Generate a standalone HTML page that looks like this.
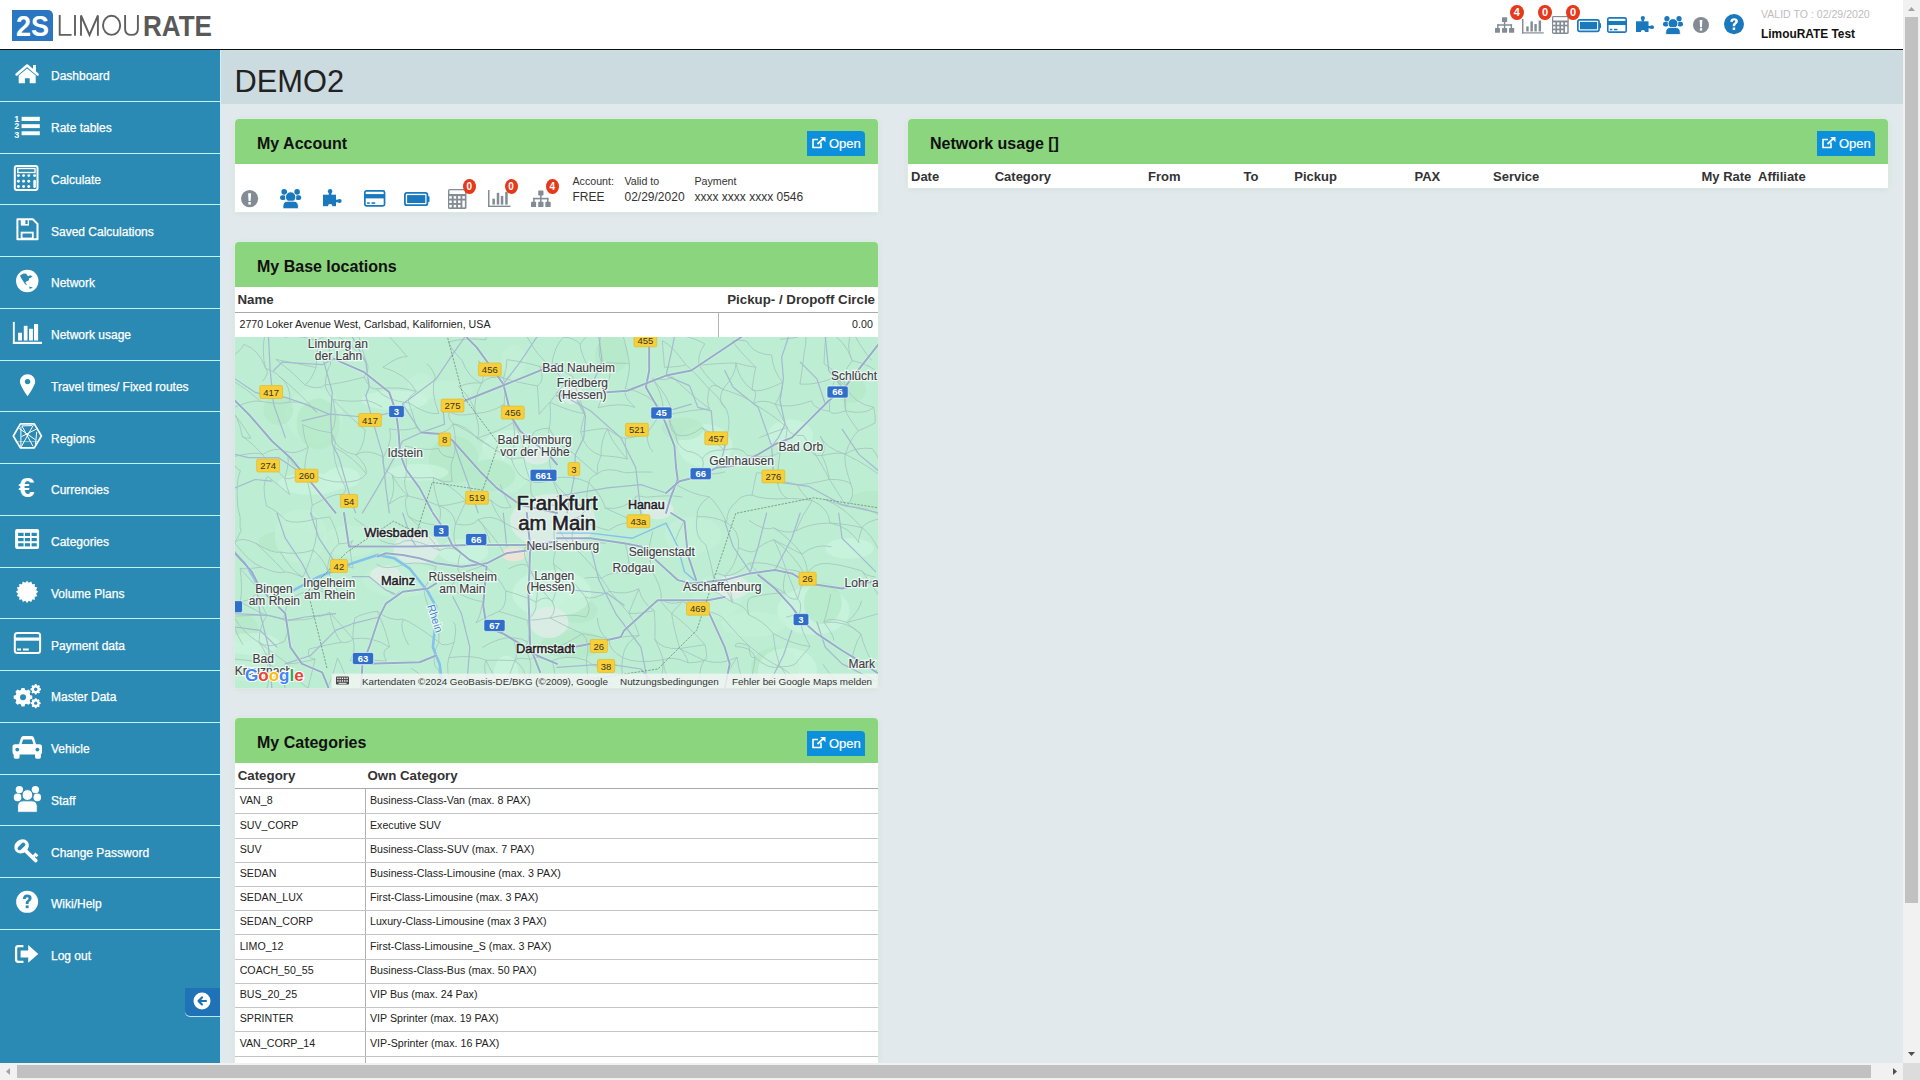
<!DOCTYPE html>
<html><head><meta charset="utf-8"><title>LimouRATE</title>
<style>
html,body{margin:0;padding:0;width:1920px;height:1080px;overflow:hidden;background:#e2e9ec;font-family:"Liberation Sans",sans-serif;position:relative;}
.a{position:absolute;}
.t{position:absolute;line-height:1;white-space:nowrap;}
.ic{position:absolute;overflow:visible;}
</style></head><body>
<div class="a" style="left:0px;top:0px;width:1903px;height:49px;background:#fff;"></div>
<div class="a" style="left:0px;top:49px;width:1903px;height:1px;background:#111;"></div>
<div class="a" style="left:12px;top:10px;width:41.3px;height:30.7px;background:#2a76c0;border-radius:0 5px 0 0;"></div>
<svg class="ic" style="left:0;top:0" width="220" height="49"><text x="16" y="35.5" font-family="Liberation Sans" font-weight="bold" font-size="29" fill="#fff" textLength="33" lengthAdjust="spacingAndGlyphs">2S</text><path d="M59.7 14.9 V34.9 H71.6" stroke="#5f5f5f" stroke-width="1.9" fill="none"/><path d="M75 14.9 V35.8" stroke="#5f5f5f" stroke-width="1.9" fill="none"/><path d="M81 35.8 V15.5 L89.5 35 L97.9 15.5 V35.8" stroke="#5f5f5f" stroke-width="1.9" fill="none" stroke-linejoin="miter"/><ellipse cx="111.6" cy="25.35" rx="8.6" ry="9.55" stroke="#5f5f5f" stroke-width="1.9" fill="none"/><path d="M125.1 14.9 V29 Q125.1 34.9 131.5 34.9 Q137.9 34.9 137.9 29 V14.9" stroke="#5f5f5f" stroke-width="1.9" fill="none"/><text x="143" y="35.5" font-family="Liberation Sans" font-weight="bold" font-size="29" fill="#595959" textLength="69" lengthAdjust="spacingAndGlyphs">RATE</text></svg>
<div class="t" style="left:1761.00px;top:8.55px;font-size:10.57px;color:#bdbdbd;">VALID TO : 02/29/2020</div>
<div class="t" style="left:1761.00px;top:28.53px;font-size:11.9px;color:#111;font-weight:bold;">LimouRATE Test</div>
<svg class="ic" style="left:1495.4px;top:17px" width="19.2" height="16" viewBox="0 0 19.7 17.2" preserveAspectRatio="none"><rect x="7.2" y="0.4" width="5.3" height="5" rx="0.6" fill="#838c95"/><rect x="9.1" y="5" width="1.5" height="3" fill="#838c95"/><rect x="2.2" y="7.8" width="15.3" height="1.6" fill="#838c95"/><rect x="2.2" y="7.8" width="1.5" height="4.5" fill="#838c95"/><rect x="9.1" y="7.8" width="1.5" height="4.5" fill="#838c95"/><rect x="16" y="7.8" width="1.5" height="4.5" fill="#838c95"/><rect x="0" y="11.8" width="5.1" height="5.2" rx="0.6" fill="#838c95"/><rect x="7.2" y="11.8" width="5.3" height="5.2" rx="0.6" fill="#838c95"/><rect x="14.4" y="11.8" width="5.3" height="5.2" rx="0.6" fill="#838c95"/></svg>
<svg class="ic" style="left:1522px;top:18.5px" width="21.75" height="14.5" viewBox="0 0 22.5 17" preserveAspectRatio="none"><rect x="0" y="0" width="1.5" height="17" fill="#838c95"/><rect x="0" y="15.6" width="22.5" height="1.4" fill="#838c95"/><rect x="4.4" y="8.7" width="2.5" height="5.9" fill="#838c95"/><rect x="8.75" y="2.8" width="2.5" height="11.8" fill="#838c95"/><rect x="12.8" y="5.9" width="2.5" height="8.7" fill="#838c95"/><rect x="17.2" y="1.8" width="2.5" height="12.8" fill="#838c95"/></svg>
<svg class="ic" style="left:1552px;top:16px" width="16.75" height="18" viewBox="0 0 18.5 20" preserveAspectRatio="none"><rect x="0" y="0" width="18.5" height="20" rx="1.6" fill="#838c95"/><rect x="1.4" y="1.3" width="15.7" height="3.7" fill="#fff"/><rect x="1.25" y="7.15" width="2.5" height="2.5" fill="#fff"/><rect x="1.25" y="11.5" width="2.5" height="2.5" fill="#fff"/><rect x="1.25" y="15.850000000000001" width="2.5" height="2.5" fill="#fff"/><rect x="5.65" y="7.15" width="2.5" height="2.5" fill="#fff"/><rect x="5.65" y="11.5" width="2.5" height="2.5" fill="#fff"/><rect x="5.65" y="15.850000000000001" width="2.5" height="2.5" fill="#fff"/><rect x="10.0" y="7.15" width="2.5" height="2.5" fill="#fff"/><rect x="10.0" y="11.5" width="2.5" height="2.5" fill="#fff"/><rect x="10.0" y="15.850000000000001" width="2.5" height="2.5" fill="#fff"/><rect x="14.35" y="7.15" width="2.5" height="2.5" fill="#fff"/><rect x="14.35" y="11.5" width="2.5" height="6.85" fill="#fff"/></svg>
<svg class="ic" style="left:1577px;top:18.5px" width="24" height="13.2" viewBox="0 0 25.5 14.1" preserveAspectRatio="none"><rect x="0.9" y="0.9" width="22.5" height="12.3" rx="2" fill="none" stroke="#1a78bd" stroke-width="1.8"/><rect x="3.1" y="3.1" width="18.2" height="7.9" fill="#1a78bd"/><rect x="23.4" y="4.2" width="2.1" height="5.7" rx="0.5" fill="#1a78bd"/></svg>
<svg class="ic" style="left:1607px;top:17px" width="20" height="16" viewBox="0 0 21.4 16.7" preserveAspectRatio="none"><rect x="0.85" y="0.85" width="19.7" height="15.0" rx="1.6" fill="none" stroke="#1a78bd" stroke-width="1.7"/><rect x="0.5" y="4.1" width="20.4" height="4.3" fill="#1a78bd"/><rect x="3.1" y="12.3" width="2.6" height="1.6" fill="#1a78bd"/><rect x="7.5" y="12.3" width="3.7" height="1.6" fill="#1a78bd"/></svg>
<svg class="ic" style="left:1636px;top:16px" width="18" height="16" viewBox="0 0 18.7 17.2" preserveAspectRatio="none"><circle cx="7.1" cy="2.2" r="2.2" fill="#1a78bd"/><rect x="5.8" y="3" width="2.6" height="3" fill="#1a78bd"/><rect x="0" y="5.7" width="13" height="11.5" fill="#1a78bd"/><circle cx="16.6" cy="12" r="2.1" fill="#1a78bd"/><rect x="12.5" y="10.7" width="3" height="2.6" fill="#1a78bd"/><circle cx="7.2" cy="17.4" r="2.3" fill="#fff"/></svg>
<svg class="ic" style="left:1663px;top:16px" width="20" height="18.6" viewBox="0 0 21.3 19.8" preserveAspectRatio="none"><circle cx="4.2" cy="2.9" r="2.8" fill="#1a78bd"/><circle cx="17.1" cy="2.9" r="2.8" fill="#1a78bd"/><rect x="0" y="6.2" width="5.9" height="4.9" rx="2.4" fill="#1a78bd"/><rect x="15.4" y="6.2" width="5.9" height="4.9" rx="2.4" fill="#1a78bd"/><circle cx="10.65" cy="8" r="5.2" fill="#1a78bd" stroke="#fff" stroke-width="0.9"/><path d="M2.9 19.8 V17.2 Q2.9 12.2 7.9 12.2 H13.4 Q18.4 12.2 18.4 17.2 V19.8 Z" fill="#1a78bd" stroke="#fff" stroke-width="0.9"/></svg>
<svg class="ic" style="left:1693px;top:17px" width="16" height="16" viewBox="0 0 17.2 17.2" preserveAspectRatio="none"><circle cx="8.6" cy="8.6" r="8.6" fill="#838c95"/><path d="M7.1 3.2 H10.1 L9.6 11 H7.6 Z" fill="#fff"/><rect x="7.35" y="12" width="2.5" height="2.6" fill="#fff"/></svg>
<svg class="ic" style="left:1724px;top:14.3px" width="20" height="20.2" viewBox="0 0 20 20" preserveAspectRatio="none"><circle cx="10" cy="10" r="10" fill="#1a78bd"/><path d="M6.3 7.6 Q6.5 4.2 10.2 4.2 Q13.9 4.2 13.9 7.2 Q13.9 9 12 10.1 Q11.2 10.6 11.2 11.6 V12.2 H8.7 V11.2 Q8.7 9.5 10.3 8.6 Q11.3 8 11.3 7.3 Q11.3 6.3 10.1 6.3 Q8.9 6.3 8.7 7.9 Z" fill="#fff"/><rect x="8.7" y="13.4" width="2.5" height="2.4" fill="#fff"/></svg>
<div class="a" style="left:1510.05px;top:5.00px;width:13.7px;height:15.4px;border-radius:50%;background:#e6391c;"></div>
<div class="t" style="left:1510.05px;width:13.7px;text-align:center;top:7.35px;font-size:11px;font-weight:bold;color:#fff;">4</div>
<div class="a" style="left:1538.25px;top:5.00px;width:13.5px;height:15.4px;border-radius:50%;background:#e6391c;"></div>
<div class="t" style="left:1538.25px;width:13.5px;text-align:center;top:7.35px;font-size:11px;font-weight:bold;color:#fff;">0</div>
<div class="a" style="left:1566.25px;top:5.00px;width:13.5px;height:15.4px;border-radius:50%;background:#e6391c;"></div>
<div class="t" style="left:1566.25px;width:13.5px;text-align:center;top:7.35px;font-size:11px;font-weight:bold;color:#fff;">0</div>
<div class="a" style="left:0px;top:50px;width:220px;height:1013px;background:#2b8ab4;"></div>
<div class="a" style="left:220px;top:50px;width:1px;height:1013px;background:#d3eff8;"></div>
<div class="a" style="left:0;top:100.76px;width:220px;height:1px;background:#bff6fc;"></div>
<div class="t" style="left:51.00px;top:70.29px;font-size:12px;color:#fff;-webkit-text-stroke:0.25px #fff;">Dashboard</div>
<div class="a" style="left:0;top:152.52px;width:220px;height:1px;background:#bff6fc;"></div>
<div class="t" style="left:51.00px;top:122.05px;font-size:12px;color:#fff;-webkit-text-stroke:0.25px #fff;">Rate tables</div>
<div class="a" style="left:0;top:204.28px;width:220px;height:1px;background:#bff6fc;"></div>
<div class="t" style="left:51.00px;top:173.81px;font-size:12px;color:#fff;-webkit-text-stroke:0.25px #fff;">Calculate</div>
<div class="a" style="left:0;top:256.04px;width:220px;height:1px;background:#bff6fc;"></div>
<div class="t" style="left:51.00px;top:225.57px;font-size:12px;color:#fff;-webkit-text-stroke:0.25px #fff;">Saved Calculations</div>
<div class="a" style="left:0;top:307.80px;width:220px;height:1px;background:#bff6fc;"></div>
<div class="t" style="left:51.00px;top:277.33px;font-size:12px;color:#fff;-webkit-text-stroke:0.25px #fff;">Network</div>
<div class="a" style="left:0;top:359.56px;width:220px;height:1px;background:#bff6fc;"></div>
<div class="t" style="left:51.00px;top:329.09px;font-size:12px;color:#fff;-webkit-text-stroke:0.25px #fff;">Network usage</div>
<div class="a" style="left:0;top:411.32px;width:220px;height:1px;background:#bff6fc;"></div>
<div class="t" style="left:51.00px;top:380.85px;font-size:12px;color:#fff;-webkit-text-stroke:0.25px #fff;">Travel times/ Fixed routes</div>
<div class="a" style="left:0;top:463.08px;width:220px;height:1px;background:#bff6fc;"></div>
<div class="t" style="left:51.00px;top:432.61px;font-size:12px;color:#fff;-webkit-text-stroke:0.25px #fff;">Regions</div>
<div class="a" style="left:0;top:514.84px;width:220px;height:1px;background:#bff6fc;"></div>
<div class="t" style="left:51.00px;top:484.37px;font-size:12px;color:#fff;-webkit-text-stroke:0.25px #fff;">Currencies</div>
<div class="a" style="left:0;top:566.60px;width:220px;height:1px;background:#bff6fc;"></div>
<div class="t" style="left:51.00px;top:536.13px;font-size:12px;color:#fff;-webkit-text-stroke:0.25px #fff;">Categories</div>
<div class="a" style="left:0;top:618.36px;width:220px;height:1px;background:#bff6fc;"></div>
<div class="t" style="left:51.00px;top:587.89px;font-size:12px;color:#fff;-webkit-text-stroke:0.25px #fff;">Volume Plans</div>
<div class="a" style="left:0;top:670.12px;width:220px;height:1px;background:#bff6fc;"></div>
<div class="t" style="left:51.00px;top:639.65px;font-size:12px;color:#fff;-webkit-text-stroke:0.25px #fff;">Payment data</div>
<div class="a" style="left:0;top:721.88px;width:220px;height:1px;background:#bff6fc;"></div>
<div class="t" style="left:51.00px;top:691.41px;font-size:12px;color:#fff;-webkit-text-stroke:0.25px #fff;">Master Data</div>
<div class="a" style="left:0;top:773.64px;width:220px;height:1px;background:#bff6fc;"></div>
<div class="t" style="left:51.00px;top:743.17px;font-size:12px;color:#fff;-webkit-text-stroke:0.25px #fff;">Vehicle</div>
<div class="a" style="left:0;top:825.40px;width:220px;height:1px;background:#bff6fc;"></div>
<div class="t" style="left:51.00px;top:794.93px;font-size:12px;color:#fff;-webkit-text-stroke:0.25px #fff;">Staff</div>
<div class="a" style="left:0;top:877.16px;width:220px;height:1px;background:#bff6fc;"></div>
<div class="t" style="left:51.00px;top:846.69px;font-size:12px;color:#fff;-webkit-text-stroke:0.25px #fff;">Change Password</div>
<div class="a" style="left:0;top:928.92px;width:220px;height:1px;background:#bff6fc;"></div>
<div class="t" style="left:51.00px;top:898.45px;font-size:12px;color:#fff;-webkit-text-stroke:0.25px #fff;">Wiki/Help</div>
<div class="t" style="left:51.00px;top:950.21px;font-size:12px;color:#fff;-webkit-text-stroke:0.25px #fff;">Log out</div>
<div class="a" style="left:185px;top:988px;width:35px;height:27.5px;background:#1f72b6;border-radius:0 0 0 5px;box-shadow:0 1px 0 #bfe6f5;"></div>
<svg class="ic" style="left:193px;top:992px" width="18" height="18" viewBox="0 0 18 18"><circle cx="9" cy="9" r="8.5" fill="#fff"/><path d="M13 9 H6 M9 5.5 L5.5 9 L9 12.5" stroke="#1f72b6" stroke-width="2.2" fill="none" stroke-linecap="round" stroke-linejoin="round"/></svg>
<svg class="ic" style="left:0;top:0" width="60" height="1063" viewBox="0 0 60 1063"><path d="M16.6 74.4 L27.1 65.6 L37.6 74.4" stroke="#fff" stroke-width="2.6" fill="none" stroke-linecap="round" stroke-linejoin="round"/><rect x="33" y="65" width="2.9" height="6.5" fill="#fff"/><path d="M18.7 75.4 L27.1 68.6 L35.7 75.4 V83.2 H29.7 V78.2 H24.9 V83.2 H18.7 Z" fill="#fff"/><text x="14.2" y="121.6" font-family="Liberation Sans" font-weight="bold" font-size="9" fill="#fff">1</text><text x="14.2" y="129.2" font-family="Liberation Sans" font-weight="bold" font-size="9" fill="#fff">2</text><text x="14.2" y="137.6" font-family="Liberation Sans" font-weight="bold" font-size="9" fill="#fff">3</text><rect x="21.6" y="116.8" width="18.2" height="4.2" fill="#fff"/><rect x="21.6" y="124.2" width="18.2" height="3.9" fill="#fff"/><rect x="21.6" y="131.3" width="18.2" height="3.9" fill="#fff"/><rect x="14.8" y="166" width="22.7" height="24" rx="2" stroke="#fff" stroke-width="2" fill="none"/><rect x="17.8" y="168.5" width="17.2" height="4" stroke="#fff" stroke-width="1.4" fill="none"/><circle cx="18.4" cy="175.6" r="1.45" fill="#fff"/><circle cx="18.4" cy="181.2" r="1.45" fill="#fff"/><circle cx="18.4" cy="186.5" r="1.45" fill="#fff"/><circle cx="23.6" cy="175.6" r="1.45" fill="#fff"/><circle cx="23.6" cy="181.2" r="1.45" fill="#fff"/><circle cx="23.6" cy="186.5" r="1.45" fill="#fff"/><circle cx="28.75" cy="175.6" r="1.45" fill="#fff"/><circle cx="28.75" cy="181.2" r="1.45" fill="#fff"/><circle cx="28.75" cy="186.5" r="1.45" fill="#fff"/><circle cx="34.6" cy="175.6" r="1.45" fill="#fff"/><rect x="33.3" y="179.8" width="2.6" height="8.2" rx="1.2" fill="#fff"/><path d="M17.4 219.2 H32.8 L37.5 223.9 V239.3 H17.4 Z" stroke="#fff" stroke-width="2" fill="none" stroke-linejoin="round"/><rect x="20.8" y="219" width="8.2" height="6.6" fill="#fff"/><rect x="25.4" y="220.2" width="2.3" height="3.8" fill="#2b8ab4"/><rect x="21.6" y="232.6" width="11.2" height="5.9" stroke="#fff" stroke-width="1.8" fill="none"/><circle cx="27.25" cy="281" r="11.2" fill="#fff"/><path d="M20.3 275.2 L23.7 273.5 L26.4 273.8 L27 275.2 L28.7 276.3 L29.8 275.2 L32.6 276.3 L30.9 277.7 L29.2 278.2 L28.7 280.4 L26.4 281.6 L25.3 282.7 L27.6 285.2 L25.1 284.3 L23.7 282.1 L21.7 279.1 L20.3 276.6 Z" fill="#2b8ab4"/><path d="M29.2 286.6 L32.8 287.4 L29.8 289.1 Z" fill="#2b8ab4"/><rect x="12.9" y="321.9" width="1.85" height="22.1" fill="#fff"/><rect x="12.9" y="341.8" width="29.1" height="2.2" fill="#fff"/><rect x="18.1" y="332.7" width="3.9" height="7.8" fill="#fff"/><rect x="23.8" y="325.8" width="3.7" height="14.7" fill="#fff"/><rect x="29" y="328.8" width="3.9" height="11.7" fill="#fff"/><rect x="34" y="324" width="4.1" height="16.5" fill="#fff"/><path d="M27.55 374.2 C31.8 374.2 35.2 377.5 35.2 381.7 C35.2 385.5 27.55 396.2 27.55 396.2 C27.55 396.2 19.9 385.5 19.9 381.7 C19.9 377.5 23.3 374.2 27.55 374.2 Z" fill="#fff"/><circle cx="27.55" cy="381.6" r="2.7" fill="#2b8ab4"/><polygon points="13.3,436 20.4,423.9 34.3,423.9 41.4,436 34.3,447.9 20.4,447.9" stroke="#fff" stroke-width="1.7" fill="none" stroke-linejoin="round"/><line x1="21.85" y1="425.9" x2="33.1" y2="446.4" stroke="#fff" stroke-width="1"/><line x1="33.4" y1="425" x2="21.26" y2="446.7" stroke="#fff" stroke-width="1"/><line x1="20.9" y1="426.8" x2="20.9" y2="446.7" stroke="#fff" stroke-width="1"/><line x1="36.7" y1="431.85" x2="35.5" y2="444.6" stroke="#fff" stroke-width="1"/><line x1="18.9" y1="428.3" x2="35.2" y2="439.6" stroke="#fff" stroke-width="1"/><line x1="21.5" y1="436.6" x2="36.5" y2="429" stroke="#fff" stroke-width="1"/><line x1="21.85" y1="425.9" x2="32" y2="425.6" stroke="#fff" stroke-width="1"/><line x1="15.5" y1="441.6" x2="38.6" y2="441.6" stroke="#fff" stroke-width="1" stroke-opacity="0.45"/><text x="18.6" y="496.6" font-family="Liberation Sans" font-weight="bold" font-size="27" fill="#fff" textLength="16" lengthAdjust="spacingAndGlyphs">€</text><rect x="15.1" y="528.9" width="24" height="20.1" rx="2" fill="#fff"/><rect x="18.1" y="532.8" width="5.50" height="3.20" fill="#2b8ab4"/><rect x="18.1" y="538" width="5.50" height="3.20" fill="#2b8ab4"/><rect x="18.1" y="543.2" width="5.50" height="3.20" fill="#2b8ab4"/><rect x="24.9" y="532.8" width="5.10" height="3.20" fill="#2b8ab4"/><rect x="24.9" y="538" width="5.10" height="3.20" fill="#2b8ab4"/><rect x="24.9" y="543.2" width="5.10" height="3.20" fill="#2b8ab4"/><rect x="31.6" y="532.8" width="5.20" height="3.20" fill="#2b8ab4"/><rect x="31.6" y="538" width="5.20" height="3.20" fill="#2b8ab4"/><rect x="31.6" y="543.2" width="5.20" height="3.20" fill="#2b8ab4"/><polygon points="27.05,580.75 28.84,582.83 31.30,581.59 32.16,584.20 34.90,584.00 34.70,586.74 37.31,587.60 36.07,590.06 38.15,591.85 36.07,593.64 37.31,596.10 34.70,596.96 34.90,599.70 32.16,599.50 31.30,602.11 28.84,600.87 27.05,602.95 25.26,600.87 22.80,602.11 21.94,599.50 19.20,599.70 19.40,596.96 16.79,596.10 18.03,593.64 15.95,591.85 18.03,590.06 16.79,587.60 19.40,586.74 19.20,584.00 21.94,584.20 22.80,581.59 25.26,582.83" fill="#fff"/><rect x="14.8" y="632.9" width="25.3" height="20.1" rx="2.5" stroke="#fff" stroke-width="2" fill="none"/><rect x="14.5" y="637.5" width="26" height="3.2" fill="#fff"/><rect x="17.1" y="648.5" width="3.9" height="2" fill="#fff"/><rect x="22.9" y="648.5" width="5.85" height="2" fill="#fff"/><polygon points="30.05,694.94 32.28,695.73 32.28,698.67 30.05,699.46 29.58,700.59 30.60,702.73 28.53,704.80 26.39,703.78 25.26,704.25 24.47,706.48 21.53,706.48 20.74,704.25 19.61,703.78 17.47,704.80 15.40,702.73 16.42,700.59 15.95,699.46 13.72,698.67 13.72,695.73 15.95,694.94 16.42,693.81 15.40,691.67 17.47,689.60 19.61,690.62 20.74,690.15 21.53,687.92 24.47,687.92 25.26,690.15 26.39,690.62 28.53,689.60 30.60,691.67 29.58,693.81" fill="#fff"/><circle cx="23.0" cy="697.2" r="7.25" fill="#fff"/><circle cx="23.0" cy="697.2" r="3.0" fill="#2b8ab4"/><polygon points="39.51,688.08 40.93,688.47 40.93,690.13 39.51,690.52 39.26,691.13 39.99,692.42 38.82,693.59 37.53,692.86 36.92,693.11 36.53,694.53 34.87,694.53 34.48,693.11 33.87,692.86 32.58,693.59 31.41,692.42 32.14,691.13 31.89,690.52 30.47,690.13 30.47,688.47 31.89,688.08 32.14,687.47 31.41,686.18 32.58,685.01 33.87,685.74 34.48,685.49 34.87,684.07 36.53,684.07 36.92,685.49 37.53,685.74 38.82,685.01 39.99,686.18 39.26,687.47" fill="#fff"/><circle cx="35.7" cy="689.3" r="3.92" fill="#fff"/><circle cx="35.7" cy="689.3" r="1.7" fill="#2b8ab4"/><polygon points="39.32,702.04 40.64,702.42 40.64,703.98 39.32,704.36 39.08,704.94 39.75,706.14 38.64,707.25 37.44,706.58 36.86,706.82 36.48,708.14 34.92,708.14 34.54,706.82 33.96,706.58 32.76,707.25 31.65,706.14 32.32,704.94 32.08,704.36 30.76,703.98 30.76,702.42 32.08,702.04 32.32,701.46 31.65,700.26 32.76,699.15 33.96,699.82 34.54,699.58 34.92,698.26 36.48,698.26 36.86,699.58 37.44,699.82 38.64,699.15 39.75,700.26 39.08,701.46" fill="#fff"/><circle cx="35.7" cy="703.2" r="3.72" fill="#fff"/><circle cx="35.7" cy="703.2" r="1.6" fill="#2b8ab4"/><path d="M18.6 745.5 L21 737.8 Q21.6 736.1 23.4 736.1 H31.6 Q33.4 736.1 34 737.8 L36.4 745.5 Z" fill="#fff"/><path d="M21.6 744.2 L23.1 739.6 H31.9 L33.4 744.2 Z" fill="#2b8ab4"/><rect x="12.5" y="744.2" width="29.5" height="10.4" rx="2.6" fill="#fff"/><rect x="13.7" y="752" width="5.9" height="6.7" rx="1.6" fill="#fff"/><rect x="35" y="752" width="5.9" height="6.7" rx="1.6" fill="#fff"/><circle cx="17.3" cy="749.6" r="1.9" fill="#2b8ab4"/><circle cx="37.4" cy="749.6" r="1.9" fill="#2b8ab4"/><circle cx="19.4" cy="789.6" r="3.7" fill="#fff"/><circle cx="35.4" cy="789.6" r="3.7" fill="#fff"/><rect x="13.8" y="793.6" width="7.6" height="7.6" rx="3.6" fill="#fff"/><rect x="33.5" y="793.6" width="7.6" height="7.6" rx="3.6" fill="#fff"/><circle cx="27.45" cy="795" r="5.4" fill="#fff" stroke="#2b8ab4" stroke-width="1"/><path d="M17.6 812.3 V806.4 Q17.6 800.8 23.2 800.8 H31.7 Q37.3 800.8 37.3 806.4 V812.3 Z" fill="#fff" stroke="#2b8ab4" stroke-width="1"/><ellipse cx="21.6" cy="846.4" rx="7.7" ry="6.6" transform="rotate(-40 21.6 846.4)" fill="#fff"/><path d="M19.5 848.3 L23.4 844.5" stroke="#2b8ab4" stroke-width="3.9" stroke-linecap="round"/><path d="M25.5 850.6 L35.8 860.6" stroke="#fff" stroke-width="3.6" stroke-linecap="round"/><path d="M31.6 856.6 L35.4 852.4 L38.4 855.2 L36.6 857.2 L35.4 856.2 L34.2 857.8 Z" fill="#fff"/><circle cx="27.15" cy="901.85" r="11" fill="#fff"/><path d="M22.9 898.9 Q23.1 894.6 27.3 894.6 Q31.6 894.6 31.6 898.2 Q31.6 900.3 29.5 901.5 Q28.6 902.1 28.6 903.2 V904 H25.7 V902.8 Q25.7 900.9 27.5 899.9 Q28.6 899.3 28.6 898.4 Q28.6 897.2 27.2 897.2 Q25.8 897.2 25.6 899.1 Z" fill="#2b8ab4"/><rect x="25.7" y="905.4" width="2.9" height="2.8" fill="#2b8ab4"/><path d="M23.4 946.2 H18.4 Q16.1 946.2 16.1 948.5 V959.6 Q16.1 961.9 18.4 961.9 H23.4" stroke="#fff" stroke-width="2.3" fill="none"/><path d="M20.6 950.6 H28.2 V945 L38.3 954 L28.2 962.8 V957.4 H20.6 Z" fill="#fff"/></svg>
<div class="a" style="left:221px;top:50px;width:1682px;height:53.5px;background:#cbdbe0;"></div>
<div class="t" style="left:234.50px;top:67.03px;font-size:30.8px;color:#222;">DEMO2</div>
<div class="a" style="left:235px;top:119px;width:643px;height:93px;background:#fff;border-radius:4px 4px 0 0;box-shadow:0 0 0 1px rgba(215,245,215,0.55),0 1px 6px rgba(0,0,0,0.06);"></div>
<div class="a" style="left:235px;top:119px;width:643px;height:45px;background:#8bd57e;border-radius:4px 4px 0 0;"></div>
<div class="t" style="left:257.00px;top:136.46px;font-size:16px;font-weight:bold;color:#111;">My Account</div>
<div class="a" style="left:807px;top:131px;width:58px;height:25px;background:#0d90db;border-radius:0 4px 0 0;"></div>
<svg class="ic" style="left:812px;top:137px" width="14" height="12" viewBox="0 0 14 12"><path d="M9 5.5 V10.5 H1 V2.5 H6" stroke="#fff" stroke-width="1.6" fill="none"/><path d="M5.5 7 L12 0.8" stroke="#fff" stroke-width="1.8"/><path d="M8.2 0 H13.5 V5.3 Z" fill="#fff"/></svg>
<div class="t" style="left:829.00px;top:137.00px;font-size:13px;color:#fff;-webkit-text-stroke:0.2px #fff;">Open</div>
<svg class="ic" style="left:240.6px;top:190.25px" width="17.2" height="17.15" viewBox="0 0 17.2 17.2" preserveAspectRatio="none"><circle cx="8.6" cy="8.6" r="8.6" fill="#838c95"/><path d="M7.1 3.2 H10.1 L9.6 11 H7.6 Z" fill="#fff"/><rect x="7.35" y="12" width="2.5" height="2.6" fill="#fff"/></svg>
<svg class="ic" style="left:280.2px;top:188.7px" width="21.3" height="19.8" viewBox="0 0 21.3 19.8" preserveAspectRatio="none"><circle cx="4.2" cy="2.9" r="2.8" fill="#1a78bd"/><circle cx="17.1" cy="2.9" r="2.8" fill="#1a78bd"/><rect x="0" y="6.2" width="5.9" height="4.9" rx="2.4" fill="#1a78bd"/><rect x="15.4" y="6.2" width="5.9" height="4.9" rx="2.4" fill="#1a78bd"/><circle cx="10.65" cy="8" r="5.2" fill="#1a78bd" stroke="#fff" stroke-width="0.9"/><path d="M2.9 19.8 V17.2 Q2.9 12.2 7.9 12.2 H13.4 Q18.4 12.2 18.4 17.2 V19.8 Z" fill="#1a78bd" stroke="#fff" stroke-width="0.9"/></svg>
<svg class="ic" style="left:322.9px;top:188.7px" width="18.7" height="17.2" viewBox="0 0 18.7 17.2" preserveAspectRatio="none"><circle cx="7.1" cy="2.2" r="2.2" fill="#1a78bd"/><rect x="5.8" y="3" width="2.6" height="3" fill="#1a78bd"/><rect x="0" y="5.7" width="13" height="11.5" fill="#1a78bd"/><circle cx="16.6" cy="12" r="2.1" fill="#1a78bd"/><rect x="12.5" y="10.7" width="3" height="2.6" fill="#1a78bd"/><circle cx="7.2" cy="17.4" r="2.3" fill="#fff"/></svg>
<svg class="ic" style="left:363.5px;top:190.25px" width="21.4" height="16.65" viewBox="0 0 21.4 16.7" preserveAspectRatio="none"><rect x="0.85" y="0.85" width="19.7" height="15.0" rx="1.6" fill="none" stroke="#1a78bd" stroke-width="1.7"/><rect x="0.5" y="4.1" width="20.4" height="4.3" fill="#1a78bd"/><rect x="3.1" y="12.3" width="2.6" height="1.6" fill="#1a78bd"/><rect x="7.5" y="12.3" width="3.7" height="1.6" fill="#1a78bd"/></svg>
<svg class="ic" style="left:403.6px;top:191.8px" width="25.5" height="14.1" viewBox="0 0 25.5 14.1" preserveAspectRatio="none"><rect x="0.9" y="0.9" width="22.5" height="12.3" rx="2" fill="none" stroke="#1a78bd" stroke-width="1.8"/><rect x="3.1" y="3.1" width="18.2" height="7.9" fill="#1a78bd"/><rect x="23.4" y="4.2" width="2.1" height="5.7" rx="0.5" fill="#1a78bd"/></svg>
<svg class="ic" style="left:447.5px;top:189px" width="18.5" height="20" viewBox="0 0 18.5 20" preserveAspectRatio="none"><rect x="0" y="0" width="18.5" height="20" rx="1.6" fill="#838c95"/><rect x="1.4" y="1.3" width="15.7" height="3.7" fill="#fff"/><rect x="1.25" y="7.15" width="2.5" height="2.5" fill="#fff"/><rect x="1.25" y="11.5" width="2.5" height="2.5" fill="#fff"/><rect x="1.25" y="15.850000000000001" width="2.5" height="2.5" fill="#fff"/><rect x="5.65" y="7.15" width="2.5" height="2.5" fill="#fff"/><rect x="5.65" y="11.5" width="2.5" height="2.5" fill="#fff"/><rect x="5.65" y="15.850000000000001" width="2.5" height="2.5" fill="#fff"/><rect x="10.0" y="7.15" width="2.5" height="2.5" fill="#fff"/><rect x="10.0" y="11.5" width="2.5" height="2.5" fill="#fff"/><rect x="10.0" y="15.850000000000001" width="2.5" height="2.5" fill="#fff"/><rect x="14.35" y="7.15" width="2.5" height="2.5" fill="#fff"/><rect x="14.35" y="11.5" width="2.5" height="6.85" fill="#fff"/></svg>
<svg class="ic" style="left:487.5px;top:190.2px" width="22.5" height="17.0" viewBox="0 0 22.5 17" preserveAspectRatio="none"><rect x="0" y="0" width="1.5" height="17" fill="#838c95"/><rect x="0" y="15.6" width="22.5" height="1.4" fill="#838c95"/><rect x="4.4" y="8.7" width="2.5" height="5.9" fill="#838c95"/><rect x="8.75" y="2.8" width="2.5" height="11.8" fill="#838c95"/><rect x="12.8" y="5.9" width="2.5" height="8.7" fill="#838c95"/><rect x="17.2" y="1.8" width="2.5" height="12.8" fill="#838c95"/></svg>
<svg class="ic" style="left:530.6px;top:190.2px" width="19.7" height="17.2" viewBox="0 0 19.7 17.2" preserveAspectRatio="none"><rect x="7.2" y="0.4" width="5.3" height="5" rx="0.6" fill="#838c95"/><rect x="9.1" y="5" width="1.5" height="3" fill="#838c95"/><rect x="2.2" y="7.8" width="15.3" height="1.6" fill="#838c95"/><rect x="2.2" y="7.8" width="1.5" height="4.5" fill="#838c95"/><rect x="9.1" y="7.8" width="1.5" height="4.5" fill="#838c95"/><rect x="16" y="7.8" width="1.5" height="4.5" fill="#838c95"/><rect x="0" y="11.8" width="5.1" height="5.2" rx="0.6" fill="#838c95"/><rect x="7.2" y="11.8" width="5.3" height="5.2" rx="0.6" fill="#838c95"/><rect x="14.4" y="11.8" width="5.3" height="5.2" rx="0.6" fill="#838c95"/></svg>
<div class="a" style="left:463.15px;top:179.30px;width:12.5px;height:15.2px;border-radius:50%;background:#e6391c;"></div>
<div class="t" style="left:463.15px;width:12.5px;text-align:center;top:182.03px;font-size:10px;font-weight:bold;color:#fff;">0</div>
<div class="a" style="left:504.50px;top:179.30px;width:13.2px;height:15.2px;border-radius:50%;background:#e6391c;"></div>
<div class="t" style="left:504.50px;width:13.2px;text-align:center;top:182.03px;font-size:10px;font-weight:bold;color:#fff;">0</div>
<div class="a" style="left:546.05px;top:179.30px;width:12.5px;height:15.2px;border-radius:50%;background:#e6391c;"></div>
<div class="t" style="left:546.05px;width:12.5px;text-align:center;top:182.03px;font-size:10px;font-weight:bold;color:#fff;">4</div>
<div class="t" style="left:572.50px;top:175.98px;font-size:10.65px;color:#333;">Account:</div>
<div class="t" style="left:572.50px;top:190.54px;font-size:12px;color:#333;">FREE</div>
<div class="t" style="left:624.50px;top:175.98px;font-size:10.65px;color:#333;">Valid to</div>
<div class="t" style="left:624.50px;top:190.54px;font-size:12px;color:#333;">02/29/2020</div>
<div class="t" style="left:694.50px;top:175.98px;font-size:10.65px;color:#333;">Payment</div>
<div class="t" style="left:694.50px;top:190.54px;font-size:12px;color:#333;">xxxx xxxx xxxx 0546</div>
<div class="a" style="left:235px;top:242px;width:643px;height:446px;background:#fff;border-radius:4px 4px 0 0;box-shadow:0 0 0 1px rgba(215,245,215,0.55),0 1px 6px rgba(0,0,0,0.06);"></div>
<div class="a" style="left:235px;top:242px;width:643px;height:45px;background:#8bd57e;border-radius:4px 4px 0 0;"></div>
<div class="t" style="left:257.00px;top:259.46px;font-size:16px;font-weight:bold;color:#111;">My Base locations</div>
<div class="t" style="left:237.50px;top:292.54px;font-size:13.3px;font-weight:bold;color:#333;">Name</div>
<div class="t" style="right:1045.00px;top:292.54px;font-size:13.3px;font-weight:bold;color:#333;">Pickup- / Dropoff Circle</div>
<div class="a" style="left:235px;top:312px;width:643px;height:1px;background:#a9a9a9;"></div>
<div class="a" style="left:718px;top:313px;width:1px;height:24px;background:#b5b5b5;"></div>
<div class="t" style="left:239.50px;top:318.98px;font-size:10.65px;color:#222;">2770 Loker Avenue West, Carlsbad, Kalifornien, USA</div>
<div class="t" style="right:1047.20px;top:318.98px;font-size:10.65px;color:#222;">0.00</div>
<svg class="ic" style="left:235px;top:337px" width="643" height="351" viewBox="235 337 643 351"><defs><clipPath id="mc"><rect x="235" y="337" width="643" height="351"/></clipPath></defs><g clip-path="url(#mc)"><rect x="235" y="337" width="643" height="351" fill="#bdeed4"/><ellipse cx="443.2" cy="389.9" rx="29.5" ry="9.4" fill="#c5f1d9" opacity="0.7"/><ellipse cx="295.5" cy="541.6" rx="37.3" ry="12.3" fill="#b3e8c8" opacity="0.7"/><ellipse cx="513.8" cy="361.5" rx="12.7" ry="16.5" fill="#c5f1d9" opacity="0.7"/><ellipse cx="314.6" cy="415.4" rx="28.8" ry="27.0" fill="#c5f1d9" opacity="0.7"/><ellipse cx="611.5" cy="354.4" rx="16.6" ry="19.1" fill="#b3e8c8" opacity="0.7"/><ellipse cx="421.2" cy="387.6" rx="13.5" ry="14.2" fill="#c5f1d9" opacity="0.7"/><ellipse cx="351.2" cy="541.1" rx="29.2" ry="15.4" fill="#c5f1d9" opacity="0.7"/><ellipse cx="692.9" cy="535.1" rx="28.6" ry="17.9" fill="#c5f1d9" opacity="0.7"/><ellipse cx="509.9" cy="447.3" rx="27.6" ry="17.1" fill="#ccf4de" opacity="0.7"/><ellipse cx="394.7" cy="400.1" rx="33.4" ry="9.6" fill="#ccf4de" opacity="0.7"/><ellipse cx="572.7" cy="644.2" rx="31.9" ry="13.8" fill="#b3e8c8" opacity="0.7"/><ellipse cx="310.9" cy="483.8" rx="32.7" ry="11.0" fill="#ccf4de" opacity="0.7"/><ellipse cx="506.2" cy="674.7" rx="12.3" ry="19.2" fill="#ccf4de" opacity="0.7"/><ellipse cx="453.7" cy="459.9" rx="24.9" ry="23.9" fill="#b3e8c8" opacity="0.7"/><ellipse cx="775.1" cy="668.6" rx="24.2" ry="21.3" fill="#b3e8c8" opacity="0.7"/><ellipse cx="705.1" cy="445.7" rx="27.3" ry="21.6" fill="#ccf4de" opacity="0.7"/><ellipse cx="418.0" cy="472.4" rx="30.1" ry="8.5" fill="#ccf4de" opacity="0.7"/><ellipse cx="463.6" cy="551.4" rx="24.8" ry="12.4" fill="#ccf4de" opacity="0.7"/><ellipse cx="318.2" cy="423.9" rx="21.7" ry="25.4" fill="#b3e8c8" opacity="0.7"/><ellipse cx="342.0" cy="478.0" rx="18.3" ry="10.7" fill="#ccf4de" opacity="0.7"/><ellipse cx="790.5" cy="434.7" rx="22.5" ry="15.2" fill="#ccf4de" opacity="0.7"/><ellipse cx="850.8" cy="390.0" rx="15.3" ry="12.6" fill="#b3e8c8" opacity="0.7"/><ellipse cx="242.8" cy="628.7" rx="15.5" ry="13.6" fill="#b3e8c8" opacity="0.7"/><ellipse cx="504.4" cy="466.6" rx="27.0" ry="27.1" fill="#c5f1d9" opacity="0.7"/><ellipse cx="787.5" cy="670.5" rx="29.6" ry="22.8" fill="#ccf4de" opacity="0.7"/><ellipse cx="813.4" cy="610.8" rx="36.2" ry="24.0" fill="#ccf4de" opacity="0.7"/><ellipse cx="491.0" cy="475.3" rx="24.4" ry="16.0" fill="#b3e8c8" opacity="0.7"/><ellipse cx="278.3" cy="410.3" rx="14.9" ry="14.8" fill="#b3e8c8" opacity="0.7"/><ellipse cx="300.8" cy="535.9" rx="26.1" ry="27.0" fill="#c5f1d9" opacity="0.7"/><ellipse cx="251.4" cy="643.9" rx="28.4" ry="11.0" fill="#ccf4de" opacity="0.7"/><ellipse cx="849.4" cy="548.4" rx="24.2" ry="10.3" fill="#ccf4de" opacity="0.7"/><ellipse cx="873.6" cy="500.6" rx="24.5" ry="9.7" fill="#b3e8c8" opacity="0.7"/><ellipse cx="717.0" cy="596.9" rx="24.4" ry="21.8" fill="#c5f1d9" opacity="0.7"/><ellipse cx="249.9" cy="670.8" rx="25.8" ry="10.9" fill="#c5f1d9" opacity="0.7"/><ellipse cx="822.8" cy="603.1" rx="18.9" ry="20.9" fill="#b3e8c8" opacity="0.7"/><ellipse cx="682.7" cy="428.7" rx="21.0" ry="11.3" fill="#b3e8c8" opacity="0.7"/><ellipse cx="577.5" cy="610.4" rx="19.9" ry="12.5" fill="#b3e8c8" opacity="0.7"/><ellipse cx="753.3" cy="624.2" rx="32.2" ry="12.5" fill="#c5f1d9" opacity="0.7"/><ellipse cx="551.9" cy="593.6" rx="39.7" ry="23.8" fill="#ccf4de" opacity="0.7"/><ellipse cx="401.6" cy="580.1" rx="38.7" ry="16.9" fill="#c5f1d9" opacity="0.7"/><ellipse cx="552.9" cy="521.2" rx="42.8" ry="27.2" fill="#dfece6" opacity="0.85"/><ellipse cx="416.7" cy="548.4" rx="23.3" ry="15.6" fill="#dfece6" opacity="0.85"/><ellipse cx="385.6" cy="575.6" rx="15.6" ry="9.7" fill="#dfece6" opacity="0.85"/><ellipse cx="549.0" cy="622.3" rx="19.4" ry="15.6" fill="#dfece6" opacity="0.85"/><ellipse cx="657.9" cy="509.5" rx="15.6" ry="9.7" fill="#dfece6" opacity="0.85"/><ellipse cx="731.8" cy="587.3" rx="17.5" ry="11.7" fill="#dfece6" opacity="0.85"/><ellipse cx="537.3" cy="455.0" rx="13.6" ry="9.7" fill="#dfece6" opacity="0.85"/><ellipse cx="572.3" cy="392.8" rx="9.7" ry="11.7" fill="#dfece6" opacity="0.85"/><ellipse cx="514.0" cy="554.2" rx="12" ry="7" fill="#ece3d6"/><path d="M243.8 344.3 Q242.4 349.2 232.6 355.9 M243.8 344.3 Q258.6 349.0 265.6 368.1 M232.6 355.9 Q233.6 375.2 230.1 378.9 M230.1 378.9 Q221.9 386.6 229.7 409.2 M230.1 378.9 Q247.2 389.0 260.6 401.3 M229.7 409.2 Q251.5 399.4 260.6 401.3 M229.7 409.2 Q238.4 415.0 242.2 436.0 M229.7 409.2 Q238.0 417.4 251.0 438.1 M242.2 436.0 Q242.2 438.4 251.0 438.1 M242.2 436.0 Q254.3 444.8 262.4 454.4 M234.6 456.4 Q255.5 451.3 262.4 454.4 M234.6 456.4 Q231.0 465.8 240.4 470.8 M240.4 470.8 Q235.4 481.2 237.9 507.4 M237.9 507.4 Q241.3 516.9 240.1 528.2 M240.1 528.2 Q243.8 528.0 234.6 542.5 M234.6 542.5 Q241.1 535.9 256.0 543.4 M234.6 542.5 Q248.8 561.9 261.3 567.1 M240.2 568.3 Q245.9 569.5 261.3 567.1 M240.2 568.3 Q242.6 590.1 240.4 601.9 M240.2 568.3 Q246.2 575.2 258.3 588.5 M240.4 601.9 Q255.6 599.7 258.3 588.5 M240.4 601.9 Q259.3 612.6 267.1 615.5 M233.1 616.2 Q254.0 615.1 267.1 615.5 M233.1 616.2 Q231.8 626.2 243.0 644.8 M233.1 616.2 Q243.4 633.4 259.0 642.5 M229.1 658.6 Q248.9 660.0 267.0 663.3 M228.7 694.5 Q250.3 698.7 267.2 688.0 M265.2 331.3 Q281.2 326.6 285.0 337.4 M265.2 331.3 Q261.2 353.6 265.6 368.1 M265.6 368.1 Q270.2 372.0 262.6 381.4 M265.6 368.1 Q278.7 374.1 278.8 375.9 M260.6 401.3 Q280.7 404.8 289.8 402.0 M262.4 454.4 Q275.9 446.1 285.5 451.2 M262.4 454.4 Q266.0 460.1 284.8 478.3 M267.5 476.3 Q261.2 483.6 266.4 506.0 M267.5 476.3 Q281.6 487.6 289.6 494.5 M266.4 506.0 Q277.4 510.9 285.5 520.2 M256.0 543.4 Q274.1 554.3 280.4 552.0 M256.0 543.4 Q265.6 551.5 284.6 572.0 M261.3 567.1 Q278.5 574.6 284.6 572.0 M258.3 588.5 Q256.3 595.5 267.1 615.5 M267.1 615.5 Q272.4 616.3 283.4 619.6 M267.1 615.5 Q259.2 625.5 259.0 642.5 M259.0 642.5 Q268.9 649.4 284.6 641.4 M259.0 642.5 Q268.6 654.8 267.0 663.3 M259.0 642.5 Q272.1 652.2 287.9 663.8 M267.0 663.3 Q270.4 676.3 267.2 688.0 M267.0 663.3 Q281.8 668.9 285.1 687.6 M285.0 337.4 Q293.1 334.0 317.1 340.2 M275.8 359.4 Q295.7 363.3 316.0 367.5 M275.8 359.4 Q290.2 369.7 304.9 384.8 M278.8 375.9 Q291.4 385.4 289.8 402.0 M278.8 375.9 Q301.2 394.2 317.2 412.6 M289.8 402.0 Q305.7 400.6 317.2 412.6 M285.5 451.2 Q295.1 455.4 308.2 447.2 M285.5 451.2 Q291.4 457.2 284.8 478.3 M285.5 451.2 Q291.2 467.3 304.5 470.6 M284.8 478.3 Q292.7 480.6 304.5 470.6 M284.8 478.3 Q286.6 486.9 289.6 494.5 M285.5 520.2 Q295.4 524.9 316.3 518.7 M280.4 552.0 Q295.8 555.4 313.1 550.2 M280.4 552.0 Q291.0 570.7 302.8 577.1 M284.6 572.0 Q288.7 571.4 302.8 577.1 M289.1 601.0 Q297.9 591.4 317.6 589.9 M289.1 601.0 Q286.6 604.9 283.4 619.6 M283.4 619.6 Q308.0 621.5 317.3 616.2 M283.4 619.6 Q291.4 624.1 284.6 641.4 M287.9 663.8 Q296.7 663.7 315.2 659.2 M287.9 663.8 Q281.8 674.0 285.1 687.6 M287.9 663.8 Q296.3 680.7 308.0 688.2 M317.1 340.2 Q326.2 335.6 331.0 332.1 M317.1 340.2 Q318.2 352.3 316.0 367.5 M316.0 367.5 Q311.6 380.1 304.9 384.8 M304.9 384.8 Q318.6 390.8 325.3 384.7 M302.7 424.5 Q313.8 430.6 330.9 432.6 M302.7 424.5 Q304.1 440.4 308.2 447.2 M308.2 447.2 Q305.1 458.1 304.5 470.6 M304.5 470.6 Q326.4 483.2 342.7 482.0 M304.5 470.6 Q310.9 492.4 312.2 505.3 M312.2 505.3 Q334.9 492.5 342.4 494.5 M312.2 505.3 Q308.9 516.5 316.3 518.7 M316.3 518.7 Q316.6 518.9 329.7 516.8 M316.3 518.7 Q318.2 534.6 313.1 550.2 M313.1 550.2 Q306.5 570.8 302.8 577.1 M313.1 550.2 Q323.1 558.2 327.3 569.8 M302.8 577.1 Q317.9 581.2 317.6 589.9 M302.8 577.1 Q318.4 586.7 341.3 599.5 M317.6 589.9 Q328.2 593.4 341.3 599.5 M317.3 616.2 Q319.0 618.0 329.6 612.2 M309.0 649.0 Q330.0 644.0 341.5 642.3 M309.0 649.0 Q306.1 658.5 315.2 659.2 M315.2 659.2 Q312.6 669.3 308.0 688.2 M308.0 688.2 Q319.2 694.7 326.0 691.0 M331.0 332.1 Q327.6 348.8 330.7 364.0 M331.0 332.1 Q354.1 345.0 366.5 362.6 M330.7 364.0 Q326.0 370.4 325.3 384.7 M325.3 384.7 Q336.7 384.5 364.1 377.1 M325.3 384.7 Q325.0 388.9 332.9 399.5 M332.9 399.5 Q351.2 402.4 365.1 400.3 M332.9 399.5 Q338.7 421.7 330.9 432.6 M332.9 399.5 Q354.3 421.2 365.2 429.9 M330.9 432.6 Q337.8 441.9 334.1 447.0 M330.9 432.6 Q335.5 450.9 355.8 454.8 M334.1 447.0 Q332.0 458.8 342.7 482.0 M334.1 447.0 Q354.7 457.9 366.3 473.7 M342.7 482.0 Q361.0 482.5 366.3 473.7 M342.7 482.0 Q348.8 490.0 342.4 494.5 M329.7 516.8 Q337.4 530.9 338.9 543.9 M338.9 543.9 Q351.9 543.0 352.6 540.4 M338.9 543.9 Q328.8 551.1 327.3 569.8 M327.3 569.8 Q339.7 563.2 353.3 568.0 M327.3 569.8 Q334.3 585.3 341.3 599.5 M341.3 599.5 Q353.7 598.5 355.1 598.6 M329.6 612.2 Q334.2 634.6 341.5 642.3 M329.6 612.2 Q343.4 627.6 352.9 638.8 M341.5 642.3 Q348.9 643.5 352.9 638.8 M337.5 658.0 Q331.5 680.9 326.0 691.0 M337.5 658.0 Q347.2 676.9 349.9 691.7 M326.0 691.0 Q343.7 689.2 349.9 691.7 M357.3 330.2 Q371.2 335.4 384.3 332.0 M357.3 330.2 Q360.9 345.1 366.5 362.6 M366.5 362.6 Q370.6 368.3 364.1 377.1 M364.1 377.1 Q370.3 390.6 376.3 388.9 M365.1 400.3 Q370.7 400.5 382.2 407.1 M365.2 429.9 Q364.0 448.5 355.8 454.8 M355.8 454.8 Q366.4 448.0 383.5 457.0 M355.8 454.8 Q367.8 466.0 366.3 473.7 M353.9 518.0 Q370.0 528.5 380.6 540.5 M352.6 540.4 Q347.8 546.8 353.3 568.0 M354.9 617.8 Q362.9 613.2 377.3 611.2 M354.9 617.8 Q352.8 630.5 352.9 638.8 M352.9 638.8 Q372.3 635.6 389.5 647.1 M352.9 638.8 Q356.4 650.9 350.0 660.6 M350.0 660.6 Q360.4 659.1 386.5 661.1 M384.3 332.0 Q394.4 325.4 407.4 331.5 M384.3 332.0 Q390.2 336.6 407.1 356.6 M382.9 367.4 Q398.0 355.9 407.1 356.6 M382.9 367.4 Q405.6 373.4 416.4 391.4 M376.3 388.9 Q399.9 386.0 416.4 391.4 M376.3 388.9 Q385.4 400.4 409.0 403.1 M389.4 428.9 Q405.0 431.6 416.5 427.6 M389.4 428.9 Q393.4 439.0 383.5 457.0 M383.5 457.0 Q380.0 468.4 392.1 474.9 M392.1 474.9 Q396.0 479.6 406.0 477.0 M392.1 474.9 Q396.5 489.3 389.4 504.1 M392.1 474.9 Q398.0 486.6 408.2 496.0 M389.4 504.1 Q401.6 494.4 408.2 496.0 M380.6 540.5 Q396.8 547.9 403.9 541.0 M376.7 564.1 Q384.5 571.5 406.3 563.7 M387.7 590.5 Q395.3 598.5 399.5 591.3 M377.3 611.2 Q389.2 621.4 403.3 619.2 M377.3 611.2 Q386.4 630.8 389.5 647.1 M389.5 647.1 Q380.0 650.3 386.5 661.1 M378.7 684.7 Q402.2 690.4 414.9 686.2 M416.4 391.4 Q406.1 398.1 409.0 403.1 M409.0 403.1 Q427.9 415.2 438.9 413.5 M409.0 403.1 Q414.4 418.2 416.5 427.6 M416.5 427.6 Q421.9 435.0 435.1 434.3 M405.5 446.0 Q426.9 451.5 438.5 448.2 M405.5 446.0 Q407.0 467.9 406.0 477.0 M406.0 477.0 Q419.3 478.7 433.3 477.5 M406.0 477.0 Q402.2 481.4 408.2 496.0 M408.2 496.0 Q424.6 499.3 438.9 505.7 M408.2 496.0 Q402.6 498.9 408.2 516.3 M408.2 516.3 Q417.2 523.0 438.7 525.5 M408.2 516.3 Q425.6 530.9 439.9 550.5 M403.9 541.0 Q414.2 538.3 439.9 550.5 M406.3 563.7 Q422.4 561.4 436.3 566.7 M403.3 619.2 Q398.6 627.4 408.6 645.2 M403.3 619.2 Q414.4 623.5 438.9 642.1 M411.0 668.1 Q425.1 676.3 436.1 687.8 M414.9 686.2 Q432.9 683.1 436.1 687.8 M426.5 364.0 Q430.2 364.8 435.4 376.5 M435.4 376.5 Q429.8 391.1 438.9 413.5 M435.1 434.3 Q448.7 432.4 453.1 423.8 M438.5 448.2 Q440.2 457.0 453.4 457.7 M433.3 477.5 Q444.2 483.5 452.3 481.2 M433.3 477.5 Q433.3 487.7 438.9 505.7 M433.3 477.5 Q449.4 483.8 466.1 500.7 M438.9 505.7 Q446.8 506.0 466.1 500.7 M438.9 505.7 Q442.3 510.7 438.7 525.5 M438.9 505.7 Q454.0 510.3 455.5 523.9 M439.9 550.5 Q449.6 544.8 460.9 551.9 M436.3 566.7 Q427.8 582.8 424.4 588.5 M424.4 588.5 Q422.9 592.9 430.3 611.5 M430.3 611.5 Q440.5 623.1 438.9 642.1 M438.9 642.1 Q442.8 647.6 454.1 642.3 M438.9 642.1 Q431.7 654.2 435.1 666.6 M435.1 666.6 Q443.3 670.1 436.1 687.8 M448.6 341.8 Q466.8 337.4 485.8 339.8 M448.6 341.8 Q450.6 348.9 462.0 360.4 M462.0 360.4 Q468.5 378.2 481.7 383.3 M458.2 386.3 Q473.6 381.5 481.7 383.3 M458.2 386.3 Q471.7 397.4 475.4 413.5 M449.8 411.0 Q454.6 417.6 475.4 413.5 M449.8 411.0 Q446.4 416.4 453.1 423.8 M453.1 423.8 Q466.1 425.2 476.9 438.3 M453.1 423.8 Q457.6 444.1 453.4 457.7 M453.1 423.8 Q464.9 428.4 490.2 446.3 M453.4 457.7 Q449.2 464.7 452.3 481.2 M466.1 500.7 Q471.5 504.1 490.7 500.0 M466.1 500.7 Q464.3 505.2 455.5 523.9 M455.5 523.9 Q472.3 527.5 478.1 519.6 M455.5 523.9 Q450.4 544.4 460.9 551.9 M460.9 551.9 Q455.3 567.9 459.7 573.3 M459.7 573.3 Q469.7 570.8 483.8 565.3 M459.7 573.3 Q455.1 580.2 450.0 588.8 M450.0 588.8 Q469.8 600.3 482.7 601.6 M453.1 621.7 Q457.6 625.0 454.1 642.3 M454.1 642.3 Q451.6 650.4 448.8 657.6 M448.8 657.6 Q474.9 654.5 486.0 660.3 M448.8 657.6 Q444.8 670.2 453.4 690.8 M453.4 690.8 Q465.0 692.4 489.5 687.8 M485.8 339.8 Q484.4 336.0 498.5 329.1 M478.5 360.7 Q486.0 375.4 481.7 383.3 M478.5 360.7 Q485.0 369.3 503.5 378.1 M481.7 383.3 Q489.0 374.6 503.5 378.1 M481.7 383.3 Q472.7 399.8 475.4 413.5 M475.4 413.5 Q491.0 412.8 504.2 404.3 M475.4 413.5 Q481.4 432.9 476.9 438.3 M476.9 438.3 Q500.5 430.8 513.2 422.6 M476.9 438.3 Q490.6 446.7 490.2 446.3 M490.2 446.3 Q498.2 451.8 511.6 459.4 M490.7 500.0 Q501.1 510.9 510.9 507.2 M490.7 500.0 Q495.7 513.2 503.3 522.2 M478.1 519.6 Q491.2 514.0 503.3 522.2 M478.1 519.6 Q484.3 523.6 490.3 543.0 M478.1 519.6 Q499.1 542.0 505.1 555.6 M483.8 565.3 Q497.0 574.3 505.7 590.8 M482.7 601.6 Q479.9 619.1 475.7 622.9 M475.7 622.9 Q487.6 616.1 498.9 611.4 M482.5 647.4 Q500.1 636.5 513.1 637.8 M486.0 660.3 Q496.7 659.9 514.9 660.6 M486.0 660.3 Q482.1 668.0 489.5 687.8 M486.0 660.3 Q491.1 672.7 502.8 688.2 M489.5 687.8 Q492.0 681.4 502.8 688.2 M498.5 329.1 Q517.8 333.8 526.2 335.0 M506.9 359.6 Q526.8 362.5 540.0 366.5 M506.9 359.6 Q507.0 368.3 503.5 378.1 M503.5 378.1 Q516.0 382.2 537.4 385.9 M503.5 378.1 Q505.2 383.3 504.2 404.3 M504.2 404.3 Q509.6 413.3 513.2 422.6 M513.2 422.6 Q516.7 435.6 511.6 459.4 M513.2 422.6 Q524.4 439.2 523.7 457.7 M511.6 459.4 Q515.8 457.6 523.7 457.7 M511.6 459.4 Q516.8 477.8 530.9 481.4 M500.2 484.2 Q502.9 493.4 510.9 507.2 M503.3 522.2 Q517.3 530.5 523.7 531.0 M508.6 568.8 Q524.7 560.3 529.0 567.8 M505.7 590.8 Q528.3 597.6 536.1 602.0 M505.7 590.8 Q506.9 607.1 498.9 611.4 M498.9 611.4 Q512.4 615.2 527.5 620.3 M513.1 637.8 Q521.5 638.1 528.2 642.1 M513.1 637.8 Q518.6 654.8 514.9 660.6 M514.9 660.6 Q517.3 656.8 529.9 659.3 M514.9 660.6 Q510.1 675.7 502.8 688.2 M514.9 660.6 Q527.0 669.1 525.7 683.3 M526.2 335.0 Q537.6 357.5 551.5 366.9 M540.0 366.5 Q538.5 367.8 551.5 366.9 M540.0 366.5 Q545.4 380.6 537.4 385.9 M537.4 385.9 Q538.6 403.0 539.2 414.3 M539.2 414.3 Q546.1 405.9 550.0 402.3 M532.7 434.1 Q534.5 429.1 549.1 428.1 M532.7 434.1 Q529.1 447.1 523.7 457.7 M523.7 457.7 Q526.3 471.6 530.9 481.4 M530.9 481.4 Q542.0 485.0 552.2 478.5 M530.9 481.4 Q529.7 497.1 534.4 497.4 M534.4 497.4 Q542.7 507.4 563.5 504.8 M525.1 547.2 Q537.6 546.6 556.9 545.6 M525.1 547.2 Q522.0 552.4 529.0 567.8 M529.0 567.8 Q540.4 587.1 536.1 602.0 M529.0 567.8 Q539.3 589.4 552.5 601.9 M536.1 602.0 Q547.3 594.0 552.5 601.9 M536.1 602.0 Q537.2 612.5 527.5 620.3 M527.5 620.3 Q538.6 619.9 549.8 617.9 M527.5 620.3 Q530.2 631.7 528.2 642.1 M528.2 642.1 Q523.0 645.2 529.9 659.3 M529.9 659.3 Q534.2 654.8 551.4 660.9 M529.9 659.3 Q532.9 673.1 525.7 683.3 M525.7 683.3 Q531.0 689.2 552.0 686.4 M563.8 337.0 Q575.5 338.3 580.3 344.3 M563.8 337.0 Q553.9 345.5 551.5 366.9 M551.5 366.9 Q557.6 373.1 565.4 383.0 M551.5 366.9 Q568.3 372.9 572.6 376.3 M565.4 383.0 Q559.6 388.6 550.0 402.3 M565.4 383.0 Q582.1 403.9 585.0 413.5 M550.0 402.3 Q573.9 413.0 585.0 413.5 M550.0 402.3 Q551.2 422.5 549.1 428.1 M549.1 428.1 Q547.4 442.4 549.1 449.8 M549.1 428.1 Q557.6 446.2 572.2 452.3 M549.1 449.8 Q565.4 446.9 572.2 452.3 M549.1 449.8 Q548.4 459.2 552.2 478.5 M552.2 478.5 Q571.5 474.4 588.9 482.6 M552.2 478.5 Q556.0 490.1 563.5 504.8 M552.2 478.5 Q563.9 498.6 587.6 508.4 M563.5 504.8 Q571.5 501.6 587.6 508.4 M563.5 504.8 Q555.0 506.4 554.9 522.8 M554.9 522.8 Q560.3 523.7 576.7 517.9 M554.9 522.8 Q552.2 539.6 556.9 545.6 M554.9 522.8 Q564.1 540.8 575.0 548.0 M556.9 545.6 Q552.9 558.4 553.6 564.0 M553.6 564.0 Q560.3 583.0 552.5 601.9 M553.6 564.0 Q568.6 574.5 585.2 596.8 M552.5 601.9 Q557.5 611.3 549.8 617.9 M549.8 617.9 Q569.6 612.9 586.0 617.1 M549.8 617.9 Q566.2 626.5 582.2 633.8 M558.8 647.0 Q574.8 638.6 582.2 633.8 M551.4 660.9 Q567.1 654.0 586.3 660.3 M551.4 660.9 Q557.3 670.8 552.0 686.4 M552.0 686.4 Q571.4 686.1 588.8 690.3 M580.3 344.3 Q588.1 330.7 602.4 331.0 M580.3 344.3 Q579.5 349.3 587.5 366.4 M587.5 366.4 Q593.0 371.0 601.5 362.6 M572.6 376.3 Q575.2 387.4 585.0 413.5 M585.0 413.5 Q581.5 425.3 580.7 432.0 M580.7 432.0 Q599.6 428.0 607.5 428.8 M580.7 432.0 Q584.7 450.4 601.0 455.6 M572.2 452.3 Q577.3 457.8 597.1 474.2 M588.9 482.6 Q589.9 476.5 597.1 474.2 M588.9 482.6 Q585.2 497.7 587.6 508.4 M588.9 482.6 Q602.5 496.5 605.3 508.1 M587.6 508.4 Q581.1 516.1 576.7 517.9 M576.7 517.9 Q598.0 528.6 608.6 530.3 M576.7 517.9 Q568.5 538.6 575.0 548.0 M575.0 548.0 Q586.2 539.4 605.5 543.4 M575.0 548.0 Q594.8 567.2 601.4 578.4 M584.5 578.1 Q596.1 576.5 601.4 578.4 M585.2 596.8 Q590.9 601.2 609.6 591.3 M585.2 596.8 Q592.5 610.0 586.0 617.1 M582.2 633.8 Q598.8 635.7 609.1 639.9 M582.2 633.8 Q591.1 641.1 586.3 660.3 M586.3 660.3 Q597.2 668.7 601.6 667.3 M586.3 660.3 Q588.3 682.8 588.8 690.3 M588.8 690.3 Q597.2 679.9 613.6 683.6 M602.4 331.0 Q611.0 328.0 622.3 334.4 M602.4 331.0 Q596.1 350.1 601.5 362.6 M601.5 362.6 Q611.2 363.2 629.3 363.3 M601.5 362.6 Q612.5 367.7 609.5 377.6 M609.5 377.6 Q604.9 389.9 598.2 407.6 M598.2 407.6 Q620.8 402.1 635.0 407.3 M607.5 428.8 Q620.7 438.8 625.4 438.1 M607.5 428.8 Q600.8 440.0 601.0 455.6 M607.5 428.8 Q610.3 440.5 627.3 459.1 M601.0 455.6 Q617.4 456.5 627.3 459.1 M601.0 455.6 Q596.3 464.4 597.1 474.2 M597.1 474.2 Q604.6 465.8 625.8 472.9 M605.3 508.1 Q623.8 510.5 635.4 497.5 M605.3 508.1 Q621.9 515.1 638.8 524.1 M608.6 530.3 Q624.4 519.4 638.8 524.1 M601.4 578.4 Q611.2 570.2 629.2 573.6 M601.4 578.4 Q609.9 590.3 609.6 591.3 M609.6 591.3 Q626.4 595.6 638.8 588.7 M609.6 591.3 Q623.8 607.5 628.8 613.2 M597.4 617.8 Q598.2 634.1 609.1 639.9 M609.1 639.9 Q625.0 635.6 639.2 635.5 M609.1 639.9 Q608.5 649.8 622.6 657.6 M622.3 334.4 Q625.8 343.4 629.3 363.3 M629.3 363.3 Q630.3 370.6 625.3 388.6 M625.3 388.6 Q622.8 396.9 635.0 407.3 M625.3 388.6 Q647.8 391.9 663.3 411.1 M625.4 438.1 Q632.7 438.3 647.0 433.2 M625.4 438.1 Q625.1 446.0 627.3 459.1 M625.8 472.9 Q635.9 471.6 652.4 472.1 M635.4 497.5 Q634.3 494.6 646.5 497.3 M635.4 497.5 Q644.6 517.4 638.8 524.1 M625.1 543.2 Q630.0 560.2 629.2 573.6 M638.8 588.7 Q631.3 607.1 628.8 613.2 M638.8 588.7 Q641.5 602.5 654.2 610.6 M628.8 613.2 Q634.9 614.5 654.2 610.6 M628.8 613.2 Q635.3 623.0 639.2 635.5 M639.2 635.5 Q624.8 641.4 622.6 657.6 M622.6 657.6 Q636.6 664.4 663.0 659.7 M622.6 657.6 Q619.2 676.5 628.8 694.4 M628.8 694.4 Q641.7 690.0 653.0 694.4 M662.3 340.7 Q663.6 355.4 664.4 367.3 M662.3 340.7 Q672.6 345.9 685.8 364.7 M664.4 367.3 Q680.9 366.8 685.8 364.7 M652.3 378.8 Q670.0 381.1 671.9 376.4 M652.3 378.8 Q663.1 393.2 663.3 411.1 M652.3 378.8 Q669.7 397.4 672.3 413.9 M663.3 411.1 Q659.6 415.1 647.0 433.2 M663.3 411.1 Q667.5 415.1 675.8 434.6 M647.0 433.2 Q646.9 445.9 653.2 452.0 M646.5 497.3 Q668.3 494.6 682.3 497.0 M652.7 531.5 Q648.7 547.1 648.6 555.0 M648.6 555.0 Q651.1 555.5 650.2 568.7 M650.2 568.7 Q662.5 586.9 661.2 599.6 M661.2 599.6 Q671.0 605.9 682.6 601.5 M661.2 599.6 Q658.7 600.3 671.6 613.5 M654.2 610.6 Q655.4 621.5 654.9 639.2 M654.9 639.2 Q661.6 649.8 679.7 648.5 M654.9 639.2 Q662.0 654.4 663.0 659.7 M663.0 659.7 Q673.1 655.7 688.3 662.8 M663.0 659.7 Q663.9 681.8 653.0 694.4 M663.0 659.7 Q664.2 678.4 675.7 686.9 M671.7 335.6 Q687.8 334.2 704.8 343.8 M685.8 364.7 Q694.7 372.3 709.2 389.0 M671.9 376.4 Q685.6 390.4 709.8 408.9 M672.3 413.9 Q692.3 409.6 709.8 408.9 M672.3 413.9 Q666.1 425.5 675.8 434.6 M675.8 434.6 Q688.1 438.9 701.8 427.7 M675.8 434.6 Q675.9 445.7 687.3 451.4 M687.3 451.4 Q694.9 451.2 702.4 458.5 M676.1 484.7 Q693.7 495.1 709.4 496.8 M684.1 521.3 Q676.6 535.2 676.1 539.7 M682.6 601.5 Q677.9 606.0 671.6 613.5 M682.6 601.5 Q687.4 603.6 697.4 611.3 M671.6 613.5 Q673.5 626.9 679.7 648.5 M671.6 613.5 Q685.8 623.2 704.9 644.6 M679.7 648.5 Q698.2 645.8 704.9 644.6 M679.7 648.5 Q685.1 652.5 688.3 662.8 M679.7 648.5 Q684.9 651.3 703.9 660.3 M688.3 662.8 Q699.8 662.4 703.9 660.3 M704.8 343.8 Q696.8 355.8 699.2 365.2 M699.2 365.2 Q721.9 363.0 735.9 363.0 M699.2 365.2 Q710.7 383.6 722.8 389.3 M709.2 389.0 Q712.1 381.5 722.8 389.3 M709.2 389.0 Q705.8 402.2 709.8 408.9 M709.2 389.0 Q715.9 393.8 725.9 408.3 M701.8 427.7 Q718.3 438.5 727.3 434.4 M701.8 427.7 Q717.9 444.8 724.2 450.0 M702.4 458.5 Q707.5 449.2 724.2 450.0 M702.4 458.5 Q705.9 467.8 697.3 472.6 M697.3 472.6 Q708.4 476.2 725.0 471.9 M709.4 496.8 Q696.2 505.4 697.0 516.7 M709.4 496.8 Q720.0 507.0 726.5 522.5 M697.0 516.7 Q713.3 515.8 726.5 522.5 M697.0 516.7 Q693.7 537.6 705.8 544.8 M705.8 544.8 Q711.5 564.6 713.5 577.1 M713.5 577.1 Q713.7 570.8 724.8 575.9 M713.5 577.1 Q728.0 588.5 732.4 602.3 M713.7 590.6 Q724.4 597.3 732.4 602.3 M697.4 611.3 Q713.8 610.5 722.5 617.4 M704.9 644.6 Q708.8 660.1 703.9 660.3 M703.9 660.3 Q720.9 665.9 737.1 657.2 M703.9 660.3 Q695.8 674.7 703.4 689.9 M732.7 341.0 Q748.6 338.4 748.8 344.6 M732.7 341.0 Q736.7 348.3 755.8 367.3 M735.9 363.0 Q745.9 366.0 755.8 367.3 M735.9 363.0 Q736.4 374.0 722.8 389.3 M735.9 363.0 Q738.8 380.1 752.0 389.7 M722.8 389.3 Q716.8 403.2 725.9 408.3 M722.8 389.3 Q745.8 396.3 753.4 403.4 M725.9 408.3 Q731.4 420.7 727.3 434.4 M727.3 434.4 Q729.5 435.2 724.2 450.0 M724.2 450.0 Q741.6 445.7 747.3 455.5 M736.5 502.1 Q740.3 494.8 752.0 495.1 M736.5 502.1 Q727.2 507.5 726.5 522.5 M726.5 522.5 Q740.4 530.6 738.5 547.7 M738.5 547.7 Q753.1 554.8 756.1 550.0 M738.5 547.7 Q735.7 567.0 724.8 575.9 M724.8 575.9 Q736.7 575.8 749.0 563.2 M724.8 575.9 Q731.5 590.7 732.4 602.3 M732.4 602.3 Q746.7 606.3 748.7 614.8 M722.5 617.4 Q741.6 639.6 749.0 645.9 M735.4 646.6 Q734.6 640.1 749.0 645.9 M735.4 646.6 Q751.9 646.5 755.2 657.6 M737.1 657.2 Q726.2 672.5 725.9 681.9 M737.1 657.2 Q739.6 678.5 747.2 686.3 M748.8 344.6 Q756.0 354.5 771.7 355.0 M755.8 367.3 Q754.0 374.2 752.0 389.7 M752.0 389.7 Q759.6 393.9 782.6 382.4 M752.0 389.7 Q758.8 390.4 753.4 403.4 M753.4 403.4 Q763.2 398.6 775.2 404.1 M753.4 403.4 Q774.1 415.5 787.2 427.6 M759.3 437.7 Q770.9 432.6 787.2 427.6 M747.3 455.5 Q771.2 459.8 780.3 451.7 M756.5 472.9 Q763.3 471.2 777.6 483.2 M756.5 472.9 Q754.4 482.5 752.0 495.1 M752.0 495.1 Q762.2 499.9 788.0 498.6 M749.0 520.3 Q764.4 531.8 773.6 527.8 M756.1 550.0 Q762.0 543.6 773.7 539.7 M749.0 563.2 Q766.2 560.8 786.3 569.8 M749.0 563.2 Q768.7 584.9 784.8 592.9 M751.2 597.3 Q769.8 593.1 784.8 592.9 M751.2 597.3 Q745.1 599.9 748.7 614.8 M748.7 614.8 Q763.9 621.3 773.0 633.4 M749.0 645.9 Q749.2 659.3 755.2 657.6 M749.0 645.9 Q768.4 662.0 780.0 666.9 M755.2 657.6 Q769.1 670.1 780.0 666.9 M755.2 657.6 Q753.3 675.9 747.2 686.3 M780.0 339.2 Q793.4 338.9 806.0 334.9 M771.7 355.0 Q772.7 370.5 782.6 382.4 M782.6 382.4 Q782.4 393.6 775.2 404.1 M775.2 404.1 Q787.6 409.4 811.5 400.9 M775.2 404.1 Q781.6 416.3 787.2 427.6 M787.2 427.6 Q790.2 436.7 803.6 435.5 M787.2 427.6 Q786.0 444.9 780.3 451.7 M780.3 451.7 Q777.0 472.8 777.6 483.2 M777.6 483.2 Q781.8 479.9 797.1 484.5 M777.6 483.2 Q780.5 495.8 788.0 498.6 M788.0 498.6 Q793.6 497.9 812.4 500.5 M773.6 527.8 Q784.4 534.2 795.8 531.0 M773.6 527.8 Q790.6 538.8 801.8 554.1 M773.7 539.7 Q783.6 544.8 801.8 554.1 M773.7 539.7 Q778.1 547.0 786.3 569.8 M773.7 539.7 Q791.0 550.9 806.0 576.2 M786.3 569.8 Q799.6 569.4 806.0 576.2 M786.3 569.8 Q781.4 586.7 784.8 592.9 M786.3 569.8 Q794.2 590.1 797.7 599.0 M784.8 592.9 Q790.0 600.6 797.7 599.0 M786.0 617.2 Q791.5 614.6 798.8 616.3 M773.0 633.4 Q793.9 644.9 810.0 646.5 M773.0 633.4 Q774.7 651.4 780.0 666.9 M780.0 666.9 Q796.6 666.9 798.1 660.1 M780.0 666.9 Q785.9 671.4 786.5 681.4 M780.0 666.9 Q795.1 675.6 802.0 688.3 M786.5 681.4 Q794.2 691.3 802.0 688.3 M806.0 334.9 Q806.4 344.2 803.9 354.7 M803.9 354.7 Q801.5 375.7 799.9 384.1 M799.9 384.1 Q818.0 385.5 835.7 376.5 M811.5 400.9 Q813.2 409.0 829.7 411.3 M803.6 435.5 Q803.5 435.6 812.2 449.2 M812.2 449.2 Q810.3 456.4 821.7 455.6 M812.2 449.2 Q823.7 467.7 829.4 479.4 M797.1 484.5 Q806.1 485.0 829.4 479.4 M797.1 484.5 Q806.1 500.5 812.4 500.5 M812.4 500.5 Q801.4 516.1 795.8 531.0 M812.4 500.5 Q829.0 508.2 830.0 523.0 M795.8 531.0 Q809.9 523.1 830.0 523.0 M801.8 554.1 Q815.3 543.2 831.4 546.7 M801.8 554.1 Q809.8 570.0 806.0 576.2 M806.0 576.2 Q811.9 562.6 827.4 563.4 M806.0 576.2 Q799.8 587.0 797.7 599.0 M797.7 599.0 Q803.1 602.8 798.8 616.3 M798.8 616.3 Q801.5 631.9 810.0 646.5 M810.0 646.5 Q800.4 658.0 798.1 660.1 M802.0 688.3 Q818.7 684.3 821.5 682.1 M826.4 331.0 Q824.2 349.7 824.0 364.0 M826.4 331.0 Q845.1 338.9 852.2 360.6 M824.0 364.0 Q836.6 371.2 835.7 376.5 M835.7 376.5 Q843.1 384.0 845.0 386.0 M835.7 376.5 Q828.1 399.3 829.7 411.3 M835.7 376.5 Q847.4 389.0 845.7 410.9 M829.7 411.3 Q831.2 415.7 845.7 410.9 M820.2 436.0 Q827.4 448.8 821.7 455.6 M820.2 436.0 Q825.6 448.2 845.2 454.1 M821.7 455.6 Q838.8 451.5 845.2 454.1 M821.7 455.6 Q826.9 464.6 829.4 479.4 M829.4 479.4 Q846.8 479.2 851.1 484.6 M829.4 479.4 Q842.9 500.7 846.7 506.5 M825.1 499.5 Q828.4 501.1 846.7 506.5 M825.1 499.5 Q844.4 507.2 862.2 527.9 M830.0 523.0 Q849.8 524.3 862.2 527.9 M830.0 523.0 Q849.7 526.8 858.9 542.7 M827.4 563.4 Q841.3 564.7 861.9 570.9 M830.7 594.2 Q827.0 613.9 823.8 622.0 M823.8 622.0 Q828.9 616.5 847.2 622.4 M823.8 622.0 Q835.0 636.8 833.6 640.5 M823.8 622.0 Q849.2 620.7 861.0 634.2 M822.8 664.2 Q832.3 678.5 847.1 694.3 M821.5 682.1 Q838.2 683.1 847.1 694.3 M852.0 330.5 Q845.2 346.5 852.2 360.6 M852.0 330.5 Q862.6 350.1 871.6 360.4 M852.2 360.6 Q841.2 373.5 845.0 386.0 M852.2 360.6 Q871.2 364.0 885.6 379.1 M845.0 386.0 Q843.4 401.1 845.7 410.9 M845.0 386.0 Q854.1 403.7 873.7 407.3 M845.7 410.9 Q865.2 415.1 873.7 407.3 M845.7 410.9 Q846.4 414.4 858.3 430.8 M858.3 430.8 Q866.4 427.6 874.7 423.2 M858.3 430.8 Q851.2 437.0 845.2 454.1 M845.2 454.1 Q856.6 446.5 872.3 448.6 M845.2 454.1 Q843.4 463.4 851.1 484.6 M845.2 454.1 Q871.5 467.2 885.9 480.3 M851.1 484.6 Q856.0 495.4 846.7 506.5 M846.7 506.5 Q868.9 506.7 883.1 518.0 M862.2 527.9 Q865.2 521.3 883.1 518.0 M862.2 527.9 Q857.2 541.6 858.9 542.7 M862.2 527.9 Q871.6 534.6 878.6 549.8 M861.9 570.9 Q864.6 575.5 875.5 577.0 M861.9 570.9 Q872.4 586.3 879.0 595.7 M861.5 601.1 Q859.3 611.1 847.2 622.4 M847.2 622.4 Q873.1 615.5 884.9 611.5 M847.2 622.4 Q847.5 624.2 861.0 634.2 M861.0 634.2 Q853.3 645.7 850.6 668.7 M861.0 634.2 Q864.1 649.1 876.1 669.4 M847.1 694.3 Q860.4 699.6 873.8 695.8 M873.7 407.3 Q876.2 420.8 874.7 423.2 M872.3 448.6 Q882.5 462.0 885.9 480.3 M885.9 480.3 Q892.9 490.7 885.1 495.5 M883.1 518.0 Q886.1 540.9 878.6 549.8 M876.1 669.4 Q880.1 687.2 873.8 695.8 " stroke="#a3c3bd" stroke-width="0.8" fill="none"/><path d="M273.6 370.5 L282.0 362.2 L322.2 364.7 L333.9 358.8" stroke="#a5b9d0" stroke-width="1.2" fill="none" stroke-linejoin="round" stroke-linecap="round" /><path d="M323.9 362.2 L332.3 392.3 L330.6 417.5 L332.3 444.3 L339.0 457.7 L352.4 504.7 L355.7 512.9" stroke="#a5b9d0" stroke-width="1.2" fill="none" stroke-linejoin="round" stroke-linecap="round" /><path d="M365.8 395.7 L377.5 437.6 L382.6 454.4 L385.9 487.9 L389.3 512.9" stroke="#a5b9d0" stroke-width="1.2" fill="none" stroke-linejoin="round" stroke-linecap="round" /><path d="M402.7 404.1 L421.1 432.6" stroke="#a5b9d0" stroke-width="1.2" fill="none" stroke-linejoin="round" stroke-linecap="round" /><path d="M442.9 409.1 L444.6 424.2 L421.1 432.6" stroke="#a5b9d0" stroke-width="1.2" fill="none" stroke-linejoin="round" stroke-linecap="round" /><path d="M235.0 454.4 L248.4 457.7 L278.6 457.7 L298.7 471.2" stroke="#a5b9d0" stroke-width="1.2" fill="none" stroke-linejoin="round" stroke-linecap="round" /><path d="M421.1 432.6 L402.7 441.0 L396.0 454.4 L377.5 487.9 L362.5 512.9" stroke="#a5b9d0" stroke-width="1.2" fill="none" stroke-linejoin="round" stroke-linecap="round" /><path d="M235.0 378.9 L255.1 392.3 L268.5 395.7 L285.3 397.4 L305.4 404.1 L328.9 414.1" stroke="#a5b9d0" stroke-width="1.2" fill="none" stroke-linejoin="round" stroke-linecap="round" /><path d="M302.1 420.9 L330.6 414.1 L369.2 417.5 L396.0 411.6" stroke="#a5b9d0" stroke-width="1.2" fill="none" stroke-linejoin="round" stroke-linecap="round" /><path d="M453.0 441.0 L461.4 464.5 L469.8 487.9 L478.2 512.9" stroke="#a5b9d0" stroke-width="1.2" fill="none" stroke-linejoin="round" stroke-linecap="round" /><path d="M235.0 487.9 L255.1 479.5 L271.9 481.2" stroke="#a5b9d0" stroke-width="1.2" fill="none" stroke-linejoin="round" stroke-linecap="round" /><path d="M464.8 337.0 L453.0 353.8 L436.2 378.9 L402.7 404.1" stroke="#a5b9d0" stroke-width="1.2" fill="none" stroke-linejoin="round" stroke-linecap="round" /><path d="M536.9 337.0 L520.1 362.2 L503.3 384.0" stroke="#a5b9d0" stroke-width="1.2" fill="none" stroke-linejoin="round" stroke-linecap="round" /><path d="M268.5 337.0 L270.2 370.5 L273.6 404.1 L285.3 437.6" stroke="#a5b9d0" stroke-width="1.2" fill="none" stroke-linejoin="round" stroke-linecap="round" /><path d="M352.4 337.0 L365.8 362.2 L369.2 387.3 L365.8 395.7" stroke="#a5b9d0" stroke-width="1.2" fill="none" stroke-linejoin="round" stroke-linecap="round" /><path d="M788.4 337.0 L781.7 357.1 L783.4 378.9 L780.0 400.7 L785.1 424.2 L778.4 437.6 L771.7 446.0 L773.3 471.2 L783.4 482.9 L808.6 486.3 L842.1 504.7 L879.0 512.9" stroke="#a5b9d0" stroke-width="1.2" fill="none" stroke-linejoin="round" stroke-linecap="round" /><path d="M557.0 392.3 L590.5 410.8 L620.7 437.6 L635.8 467.8 L640.9 512.9" stroke="#a5b9d0" stroke-width="1.2" fill="none" stroke-linejoin="round" stroke-linecap="round" /><path d="M577.1 400.7 L585.5 415.8 L583.8 437.6 L575.4 454.4 L573.8 479.5 L567.1 512.9" stroke="#a5b9d0" stroke-width="1.2" fill="none" stroke-linejoin="round" stroke-linecap="round" /><path d="M691.2 404.1 L674.4 409.1 L659.3 412.5" stroke="#a5b9d0" stroke-width="1.2" fill="none" stroke-linejoin="round" stroke-linecap="round" /><path d="M666.0 375.6 L689.5 385.6 L697.9 407.4 L711.3 410.8 L713.0 430.9 L724.7 446.0 L723.0 454.4 L716.3 467.8" stroke="#a5b9d0" stroke-width="1.2" fill="none" stroke-linejoin="round" stroke-linecap="round" /><path d="M825.3 337.0 L828.7 370.5 L842.1 387.3" stroke="#a5b9d0" stroke-width="1.2" fill="none" stroke-linejoin="round" stroke-linecap="round" /><path d="M557.0 496.3 L607.3 487.9 L640.9 484.6 L666.0 493.0" stroke="#a5b9d0" stroke-width="1.2" fill="none" stroke-linejoin="round" stroke-linecap="round" /><path d="M674.4 337.0 L671.0 353.8 L666.0 375.6" stroke="#a5b9d0" stroke-width="1.2" fill="none" stroke-linejoin="round" stroke-linecap="round" /><path d="M724.7 370.5 L733.1 387.3 L758.2 407.4 L771.7 446.0" stroke="#a5b9d0" stroke-width="1.2" fill="none" stroke-linejoin="round" stroke-linecap="round" /><path d="M800.2 362.2 L816.9 378.9 L825.3 404.1" stroke="#a5b9d0" stroke-width="1.2" fill="none" stroke-linejoin="round" stroke-linecap="round" /><path d="M842.1 429.2 L858.9 454.4 L879.0 471.2" stroke="#a5b9d0" stroke-width="1.2" fill="none" stroke-linejoin="round" stroke-linecap="round" /><path d="M598.9 337.0 L602.3 362.2 L590.5 387.3" stroke="#a5b9d0" stroke-width="1.2" fill="none" stroke-linejoin="round" stroke-linecap="round" /><path d="M235.0 551.6 L245.1 563.3 L255.1 580.1 L260.2 613.6 L268.5 647.2 L271.9 688.9" stroke="#a5b9d0" stroke-width="1.2" fill="none" stroke-linejoin="round" stroke-linecap="round" /><path d="M310.5 513.0 L318.9 538.2 L335.6 563.3" stroke="#a5b9d0" stroke-width="1.2" fill="none" stroke-linejoin="round" stroke-linecap="round" /><path d="M352.4 576.7 L369.2 576.7 L385.9 590.1 L394.3 593.5" stroke="#a5b9d0" stroke-width="1.2" fill="none" stroke-linejoin="round" stroke-linecap="round" /><path d="M379.2 617.0 L352.4 623.7 L335.6 630.4 L310.5 655.5 L285.3 663.9" stroke="#a5b9d0" stroke-width="1.2" fill="none" stroke-linejoin="round" stroke-linecap="round" /><path d="M453.0 596.9 L461.4 613.6 L469.8 647.2 L466.4 688.9" stroke="#a5b9d0" stroke-width="1.2" fill="none" stroke-linejoin="round" stroke-linecap="round" /><path d="M503.3 513.0 L506.7 546.5" stroke="#a5b9d0" stroke-width="1.2" fill="none" stroke-linejoin="round" stroke-linecap="round" /><path d="M235.0 627.0 L260.2 630.4 L276.9 647.2" stroke="#a5b9d0" stroke-width="1.2" fill="none" stroke-linejoin="round" stroke-linecap="round" /><path d="M235.0 613.6 L268.5 615.3 L288.7 620.3 L305.4 617.0 L335.6 613.6" stroke="#a5b9d0" stroke-width="1.2" fill="none" stroke-linejoin="round" stroke-linecap="round" /><path d="M276.9 513.0 L285.3 538.2 L302.1 563.3 L310.5 580.1" stroke="#a5b9d0" stroke-width="1.2" fill="none" stroke-linejoin="round" stroke-linecap="round" /><path d="M402.7 513.0 L411.1 538.2 L416.1 546.5" stroke="#a5b9d0" stroke-width="1.2" fill="none" stroke-linejoin="round" stroke-linecap="round" /><path d="M838.7 513.0 L842.1 538.2 L858.9 554.9 L875.6 571.7" stroke="#a5b9d0" stroke-width="1.2" fill="none" stroke-linejoin="round" stroke-linecap="round" /><path d="M590.5 546.5 L598.9 580.1 L615.7 613.6 L640.9 647.2 L649.2 688.9" stroke="#a5b9d0" stroke-width="1.2" fill="none" stroke-linejoin="round" stroke-linecap="round" /><path d="M557.0 588.5 L607.3 593.5 L624.1 605.2" stroke="#a5b9d0" stroke-width="1.2" fill="none" stroke-linejoin="round" stroke-linecap="round" /><path d="M724.7 521.4 L733.1 546.5 L749.9 571.7" stroke="#a5b9d0" stroke-width="1.2" fill="none" stroke-linejoin="round" stroke-linecap="round" /><path d="M766.6 513.0 L758.2 546.5 L749.9 573.4" stroke="#a5b9d0" stroke-width="1.2" fill="none" stroke-linejoin="round" stroke-linecap="round" /><path d="M816.9 622.0 L825.3 647.2 L842.1 663.9 L875.6 680.7" stroke="#a5b9d0" stroke-width="1.2" fill="none" stroke-linejoin="round" stroke-linecap="round" /><path d="M557.0 667.3 L607.3 663.9 L640.9 669.0 L657.6 688.9" stroke="#a5b9d0" stroke-width="1.2" fill="none" stroke-linejoin="round" stroke-linecap="round" /><path d="M791.8 630.4 L783.4 655.5 L766.6 688.9" stroke="#a5b9d0" stroke-width="1.2" fill="none" stroke-linejoin="round" stroke-linecap="round" /><path d="M800.2 513.0 L791.8 538.2 L775.0 570.0" stroke="#a5b9d0" stroke-width="1.2" fill="none" stroke-linejoin="round" stroke-linecap="round" /><path d="M235.0 553.2 L245.1 563.3 L256.8 583.4" stroke="#7fb6e6" stroke-width="2.0" fill="none" stroke-linejoin="round" stroke-linecap="round" /><path d="M293.7 590.1 L318.9 576.7 L352.4 563.3 L377.5 554.9 L394.3 558.3 L409.4 568.3 L427.9 591.8 L436.2 606.9 L434.6 630.4 L432.9 647.2 L439.6 663.9 L442.9 688.9" stroke="#84c2ea" stroke-width="2.6" fill="none" stroke-linejoin="round" stroke-linecap="round" /><path d="M557.0 533.1 L590.5 533.1 L632.5 538.2 L666.0 523.1 L677.7 546.5 L684.5 571.7 L694.5 580.1" stroke="#84c2ea" stroke-width="1.4" fill="none" stroke-linejoin="round" stroke-linecap="round" /><path d="M333.9 358.8 L364.1 372.2 L389.3 392.3 L396.0 411.6 L398.5 430.9 L400.2 454.4 L406.1 469.5 L419.5 487.9 L432.9 512.9" stroke="#ffffff" stroke-width="3.2" fill="none" stroke-linejoin="round" stroke-linecap="round" stroke-opacity="0.35"/><path d="M333.9 358.8 L364.1 372.2 L389.3 392.3 L396.0 411.6 L398.5 430.9 L400.2 454.4 L406.1 469.5 L419.5 487.9 L432.9 512.9" stroke="#98abc9" stroke-width="2.0" fill="none" stroke-linejoin="round" stroke-linecap="round" /><path d="M421.1 432.6 L444.6 434.3 L453.0 441.0 L479.8 471.2 L496.6 487.9 L520.1 504.7 L557.0 512.9" stroke="#ffffff" stroke-width="3.2" fill="none" stroke-linejoin="round" stroke-linecap="round" stroke-opacity="0.35"/><path d="M421.1 432.6 L444.6 434.3 L453.0 441.0 L479.8 471.2 L496.6 487.9 L520.1 504.7 L557.0 512.9" stroke="#98abc9" stroke-width="2.0" fill="none" stroke-linejoin="round" stroke-linecap="round" /><path d="M466.4 337.0 L476.5 347.1 L503.3 384.0 L511.7 417.5 L520.1 430.9 L548.6 454.4 L557.0 464.5" stroke="#ffffff" stroke-width="3.2" fill="none" stroke-linejoin="round" stroke-linecap="round" stroke-opacity="0.35"/><path d="M466.4 337.0 L476.5 347.1 L503.3 384.0 L511.7 417.5 L520.1 430.9 L548.6 454.4 L557.0 464.5" stroke="#98abc9" stroke-width="2.0" fill="none" stroke-linejoin="round" stroke-linecap="round" /><path d="M464.8 400.7 L506.7 384.0 L557.0 363.8" stroke="#ffffff" stroke-width="3.2" fill="none" stroke-linejoin="round" stroke-linecap="round" stroke-opacity="0.35"/><path d="M464.8 400.7 L506.7 384.0 L557.0 363.8" stroke="#98abc9" stroke-width="2.0" fill="none" stroke-linejoin="round" stroke-linecap="round" /><path d="M235.0 400.7 L250.1 415.8 L271.9 441.0 L290.3 457.7 L315.5 487.9 L335.6 512.9" stroke="#ffffff" stroke-width="3.2" fill="none" stroke-linejoin="round" stroke-linecap="round" stroke-opacity="0.35"/><path d="M235.0 400.7 L250.1 415.8 L271.9 441.0 L290.3 457.7 L315.5 487.9 L335.6 512.9" stroke="#98abc9" stroke-width="2.0" fill="none" stroke-linejoin="round" stroke-linecap="round" /><path d="M647.6 337.0 L649.2 347.1 L649.2 370.5 L645.9 387.3 L657.6 407.4 L661.0 412.5 L666.0 424.2 L674.4 446.0 L676.1 467.8 L677.7 479.5 L671.0 496.3 L666.0 512.9" stroke="#ffffff" stroke-width="3.2" fill="none" stroke-linejoin="round" stroke-linecap="round" stroke-opacity="0.35"/><path d="M647.6 337.0 L649.2 347.1 L649.2 370.5 L645.9 387.3 L657.6 407.4 L661.0 412.5 L666.0 424.2 L674.4 446.0 L676.1 467.8 L677.7 479.5 L671.0 496.3 L666.0 512.9" stroke="#98abc9" stroke-width="2.0" fill="none" stroke-linejoin="round" stroke-linecap="round" /><path d="M666.0 493.0 L679.4 481.2 L699.5 476.2 L716.3 467.8 L733.1 466.1 L758.2 454.4 L775.0 444.3 L791.8 437.6 L808.6 420.9 L828.7 400.7 L842.1 390.7 L879.0 343.7" stroke="#ffffff" stroke-width="3.2" fill="none" stroke-linejoin="round" stroke-linecap="round" stroke-opacity="0.35"/><path d="M666.0 493.0 L679.4 481.2 L699.5 476.2 L716.3 467.8 L733.1 466.1 L758.2 454.4 L775.0 444.3 L791.8 437.6 L808.6 420.9 L828.7 400.7 L842.1 390.7 L879.0 343.7" stroke="#98abc9" stroke-width="2.0" fill="none" stroke-linejoin="round" stroke-linecap="round" /><path d="M741.5 337.0 L691.2 370.5 L666.0 375.6 L627.4 390.7 L607.3 392.3 L557.0 395.7" stroke="#ffffff" stroke-width="3.2" fill="none" stroke-linejoin="round" stroke-linecap="round" stroke-opacity="0.35"/><path d="M741.5 337.0 L691.2 370.5 L666.0 375.6 L627.4 390.7 L607.3 392.3 L557.0 395.7" stroke="#98abc9" stroke-width="2.0" fill="none" stroke-linejoin="round" stroke-linecap="round" /><path d="M344.0 513.0 L349.0 546.5 L385.9 546.5 L416.1 546.5 L469.8 544.9 L528.5 544.9 L557.0 541.5" stroke="#ffffff" stroke-width="3.2" fill="none" stroke-linejoin="round" stroke-linecap="round" stroke-opacity="0.35"/><path d="M344.0 513.0 L349.0 546.5 L385.9 546.5 L416.1 546.5 L469.8 544.9 L528.5 544.9 L557.0 541.5" stroke="#98abc9" stroke-width="2.0" fill="none" stroke-linejoin="round" stroke-linecap="round" /><path d="M377.5 556.6 L385.9 553.2 L402.7 554.9 L419.5 558.3 L436.2 563.3 L461.4 566.7 L486.6 563.3 L506.7 553.2 L557.0 546.5" stroke="#ffffff" stroke-width="3.2" fill="none" stroke-linejoin="round" stroke-linecap="round" stroke-opacity="0.35"/><path d="M377.5 556.6 L385.9 553.2 L402.7 554.9 L419.5 558.3 L436.2 563.3 L461.4 566.7 L486.6 563.3 L506.7 553.2 L557.0 546.5" stroke="#98abc9" stroke-width="2.0" fill="none" stroke-linejoin="round" stroke-linecap="round" /><path d="M432.9 513.0 L444.6 529.8 L453.0 546.5 L469.8 560.0 L486.6 566.7" stroke="#ffffff" stroke-width="3.2" fill="none" stroke-linejoin="round" stroke-linecap="round" stroke-opacity="0.35"/><path d="M432.9 513.0 L444.6 529.8 L453.0 546.5 L469.8 560.0 L486.6 566.7" stroke="#98abc9" stroke-width="2.0" fill="none" stroke-linejoin="round" stroke-linecap="round" /><path d="M486.6 566.7 L483.2 605.2 L486.6 627.0 L503.3 633.7 L520.1 643.8 L536.9 655.5 L557.0 663.9" stroke="#ffffff" stroke-width="3.2" fill="none" stroke-linejoin="round" stroke-linecap="round" stroke-opacity="0.35"/><path d="M486.6 566.7 L483.2 605.2 L486.6 627.0 L503.3 633.7 L520.1 643.8 L536.9 655.5 L557.0 663.9" stroke="#98abc9" stroke-width="2.0" fill="none" stroke-linejoin="round" stroke-linecap="round" /><path d="M360.8 688.9 L362.5 663.9 L369.2 647.2 L379.2 617.0 L385.9 603.6 L402.7 591.8 L427.9 588.5 L436.2 583.4" stroke="#ffffff" stroke-width="3.2" fill="none" stroke-linejoin="round" stroke-linecap="round" stroke-opacity="0.35"/><path d="M360.8 688.9 L362.5 663.9 L369.2 647.2 L379.2 617.0 L385.9 603.6 L402.7 591.8 L427.9 588.5 L436.2 583.4" stroke="#98abc9" stroke-width="2.0" fill="none" stroke-linejoin="round" stroke-linecap="round" /><path d="M235.0 553.2 L251.8 571.7 L260.2 588.5 L285.3 613.6 L290.3 647.2 L302.1 663.9 L322.2 672.3 L328.9 688.9" stroke="#ffffff" stroke-width="3.2" fill="none" stroke-linejoin="round" stroke-linecap="round" stroke-opacity="0.35"/><path d="M235.0 553.2 L251.8 571.7 L260.2 588.5 L285.3 613.6 L290.3 647.2 L302.1 663.9 L322.2 672.3 L328.9 688.9" stroke="#98abc9" stroke-width="2.0" fill="none" stroke-linejoin="round" stroke-linecap="round" /><path d="M359.1 663.9 L419.5 662.3 L436.2 655.5" stroke="#ffffff" stroke-width="3.2" fill="none" stroke-linejoin="round" stroke-linecap="round" stroke-opacity="0.35"/><path d="M359.1 663.9 L419.5 662.3 L436.2 655.5" stroke="#98abc9" stroke-width="2.0" fill="none" stroke-linejoin="round" stroke-linecap="round" /><path d="M526.8 513.0 L530.2 546.5 L528.5 596.9 L530.2 647.2 L540.2 672.3" stroke="#ffffff" stroke-width="3.2" fill="none" stroke-linejoin="round" stroke-linecap="round" stroke-opacity="0.35"/><path d="M526.8 513.0 L530.2 546.5 L528.5 596.9 L530.2 647.2 L540.2 672.3" stroke="#98abc9" stroke-width="2.0" fill="none" stroke-linejoin="round" stroke-linecap="round" /><path d="M758.2 575.0 L775.0 588.5 L791.8 606.9 L801.8 620.3 L816.9 633.7 L842.1 650.5 L858.9 660.6 L879.0 674.0" stroke="#ffffff" stroke-width="3.2" fill="none" stroke-linejoin="round" stroke-linecap="round" stroke-opacity="0.35"/><path d="M758.2 575.0 L775.0 588.5 L791.8 606.9 L801.8 620.3 L816.9 633.7 L842.1 650.5 L858.9 660.6 L879.0 674.0" stroke="#98abc9" stroke-width="2.0" fill="none" stroke-linejoin="round" stroke-linecap="round" /><path d="M557.0 538.2 L590.5 538.2 L624.1 543.2 L640.9 546.5 L677.7 580.1 L691.2 583.4 L724.7 580.1 L749.9 573.4 L775.0 570.0 L791.8 573.4 L808.6 583.4 L842.1 588.5 L879.0 580.1" stroke="#ffffff" stroke-width="3.2" fill="none" stroke-linejoin="round" stroke-linecap="round" stroke-opacity="0.35"/><path d="M557.0 538.2 L590.5 538.2 L624.1 543.2 L640.9 546.5 L677.7 580.1 L691.2 583.4 L724.7 580.1 L749.9 573.4 L775.0 570.0 L791.8 573.4 L808.6 583.4 L842.1 588.5 L879.0 580.1" stroke="#98abc9" stroke-width="2.0" fill="none" stroke-linejoin="round" stroke-linecap="round" /><path d="M557.0 650.5 L590.5 643.8 L620.7 637.1 L624.1 630.4 L657.6 600.2 L707.9 600.2 L724.7 596.9" stroke="#ffffff" stroke-width="3.2" fill="none" stroke-linejoin="round" stroke-linecap="round" stroke-opacity="0.35"/><path d="M557.0 650.5 L590.5 643.8 L620.7 637.1 L624.1 630.4 L657.6 600.2 L707.9 600.2 L724.7 596.9" stroke="#98abc9" stroke-width="2.0" fill="none" stroke-linejoin="round" stroke-linecap="round" /><path d="M707.9 610.3 L724.7 647.2 L729.7 663.9 L724.7 688.9" stroke="#ffffff" stroke-width="3.2" fill="none" stroke-linejoin="round" stroke-linecap="round" stroke-opacity="0.35"/><path d="M707.9 610.3 L724.7 647.2 L729.7 663.9 L724.7 688.9" stroke="#98abc9" stroke-width="2.0" fill="none" stroke-linejoin="round" stroke-linecap="round" /><path d="M671.0 513.0 L684.5 521.4 L687.8 554.9 L696.2 580.1" stroke="#ffffff" stroke-width="3.2" fill="none" stroke-linejoin="round" stroke-linecap="round" stroke-opacity="0.35"/><path d="M671.0 513.0 L684.5 521.4 L687.8 554.9 L696.2 580.1" stroke="#98abc9" stroke-width="2.0" fill="none" stroke-linejoin="round" stroke-linecap="round" /><path d="M447.8 338.3 L463.4 396.7 L498.4 443.4 L482.8 490.1 L432.3 482.3 L416.7 532.8 L393.4 521.2 L346.7 552.3 L307.8 591.2 L327.2 669.0" stroke="#6d8a7c" stroke-width="0.8" fill="none" stroke-linejoin="round" stroke-linecap="round" stroke-dasharray="1.5 2"/><path d="M914.6 513.4 L813.5 497.8 L735.7 513.4 L696.8 630.1 L657.9 669.0 L502.3 692.3" stroke="#6d8a7c" stroke-width="0.8" fill="none" stroke-linejoin="round" stroke-linecap="round" stroke-dasharray="1.5 2"/><rect x="478.4" y="363.0" width="22.8" height="13" rx="1.5" fill="#f6cf3a" stroke="#e3b51c" stroke-width="0.6"/><text x="489.8" y="373.1" text-anchor="middle" font-family="Liberation Sans" font-size="9.5" fill="#3a3320">456</text><rect x="634.0" y="333.8" width="22.8" height="13" rx="1.5" fill="#f6cf3a" stroke="#e3b51c" stroke-width="0.6"/><text x="645.4" y="343.9" text-anchor="middle" font-family="Liberation Sans" font-size="9.5" fill="#3a3320">455</text><rect x="259.8" y="385.5" width="22.8" height="13" rx="1.5" fill="#f6cf3a" stroke="#e3b51c" stroke-width="0.6"/><text x="271.2" y="395.6" text-anchor="middle" font-family="Liberation Sans" font-size="9.5" fill="#3a3320">417</text><rect x="358.6" y="413.5" width="22.8" height="13" rx="1.5" fill="#f6cf3a" stroke="#e3b51c" stroke-width="0.6"/><text x="370.0" y="423.6" text-anchor="middle" font-family="Liberation Sans" font-size="9.5" fill="#3a3320">417</text><rect x="441.1" y="399.1" width="22.8" height="13" rx="1.5" fill="#f6cf3a" stroke="#e3b51c" stroke-width="0.6"/><text x="452.5" y="409.2" text-anchor="middle" font-family="Liberation Sans" font-size="9.5" fill="#3a3320">275</text><rect x="501.4" y="406.1" width="22.8" height="13" rx="1.5" fill="#f6cf3a" stroke="#e3b51c" stroke-width="0.6"/><text x="512.8" y="416.2" text-anchor="middle" font-family="Liberation Sans" font-size="9.5" fill="#3a3320">456</text><rect x="625.5" y="423.3" width="22.8" height="13" rx="1.5" fill="#f6cf3a" stroke="#e3b51c" stroke-width="0.6"/><text x="636.9" y="433.4" text-anchor="middle" font-family="Liberation Sans" font-size="9.5" fill="#3a3320">521</text><rect x="704.8" y="431.8" width="22.8" height="13" rx="1.5" fill="#f6cf3a" stroke="#e3b51c" stroke-width="0.6"/><text x="716.2" y="441.9" text-anchor="middle" font-family="Liberation Sans" font-size="9.5" fill="#3a3320">457</text><rect x="438.9" y="433.0" width="11.6" height="13" rx="1.5" fill="#f6cf3a" stroke="#e3b51c" stroke-width="0.6"/><text x="444.7" y="443.1" text-anchor="middle" font-family="Liberation Sans" font-size="9.5" fill="#3a3320">8</text><rect x="256.7" y="459.0" width="22.8" height="13" rx="1.5" fill="#f6cf3a" stroke="#e3b51c" stroke-width="0.6"/><text x="268.1" y="469.1" text-anchor="middle" font-family="Liberation Sans" font-size="9.5" fill="#3a3320">274</text><rect x="295.2" y="469.2" width="22.8" height="13" rx="1.5" fill="#f6cf3a" stroke="#e3b51c" stroke-width="0.6"/><text x="306.6" y="479.3" text-anchor="middle" font-family="Liberation Sans" font-size="9.5" fill="#3a3320">260</text><rect x="568.1" y="462.5" width="11.6" height="13" rx="1.5" fill="#f6cf3a" stroke="#e3b51c" stroke-width="0.6"/><text x="573.9" y="472.6" text-anchor="middle" font-family="Liberation Sans" font-size="9.5" fill="#3a3320">3</text><rect x="762.0" y="469.9" width="22.8" height="13" rx="1.5" fill="#f6cf3a" stroke="#e3b51c" stroke-width="0.6"/><text x="773.4" y="480.0" text-anchor="middle" font-family="Liberation Sans" font-size="9.5" fill="#3a3320">276</text><rect x="340.4" y="494.4" width="17.2" height="13" rx="1.5" fill="#f6cf3a" stroke="#e3b51c" stroke-width="0.6"/><text x="349.0" y="504.5" text-anchor="middle" font-family="Liberation Sans" font-size="9.5" fill="#3a3320">54</text><rect x="465.6" y="491.3" width="22.8" height="13" rx="1.5" fill="#f6cf3a" stroke="#e3b51c" stroke-width="0.6"/><text x="477.0" y="501.4" text-anchor="middle" font-family="Liberation Sans" font-size="9.5" fill="#3a3320">519</text><rect x="627.0" y="514.7" width="22.8" height="13" rx="1.5" fill="#f6cf3a" stroke="#e3b51c" stroke-width="0.6"/><text x="638.4" y="524.8" text-anchor="middle" font-family="Liberation Sans" font-size="9.5" fill="#3a3320">43a</text><rect x="330.3" y="559.4" width="17.2" height="13" rx="1.5" fill="#f6cf3a" stroke="#e3b51c" stroke-width="0.6"/><text x="338.9" y="569.5" text-anchor="middle" font-family="Liberation Sans" font-size="9.5" fill="#3a3320">42</text><rect x="799.0" y="572.2" width="17.2" height="13" rx="1.5" fill="#f6cf3a" stroke="#e3b51c" stroke-width="0.6"/><text x="807.6" y="582.3" text-anchor="middle" font-family="Liberation Sans" font-size="9.5" fill="#3a3320">26</text><rect x="686.5" y="602.2" width="22.8" height="13" rx="1.5" fill="#f6cf3a" stroke="#e3b51c" stroke-width="0.6"/><text x="697.9" y="612.3" text-anchor="middle" font-family="Liberation Sans" font-size="9.5" fill="#3a3320">469</text><rect x="590.2" y="639.5" width="17.2" height="13" rx="1.5" fill="#f6cf3a" stroke="#e3b51c" stroke-width="0.6"/><text x="598.8" y="649.6" text-anchor="middle" font-family="Liberation Sans" font-size="9.5" fill="#3a3320">26</text><rect x="597.5" y="659.4" width="17.2" height="13" rx="1.5" fill="#f6cf3a" stroke="#e3b51c" stroke-width="0.6"/><text x="606.1" y="669.5" text-anchor="middle" font-family="Liberation Sans" font-size="9.5" fill="#3a3320">38</text><rect x="827.0" y="386.0" width="21.2" height="12" rx="2" fill="#2f6fca" stroke="#fff" stroke-width="0.6"/><text x="837.6" y="395.4" text-anchor="middle" font-family="Liberation Sans" font-weight="bold" font-size="9.5" fill="#fff">66</text><rect x="388.7" y="405.5" width="15.6" height="12" rx="2" fill="#2f6fca" stroke="#fff" stroke-width="0.6"/><text x="396.5" y="414.9" text-anchor="middle" font-family="Liberation Sans" font-weight="bold" font-size="9.5" fill="#fff">3</text><rect x="650.8" y="407.0" width="21.2" height="12" rx="2" fill="#2f6fca" stroke="#fff" stroke-width="0.6"/><text x="661.4" y="416.4" text-anchor="middle" font-family="Liberation Sans" font-weight="bold" font-size="9.5" fill="#fff">45</text><rect x="530.1" y="469.3" width="26.8" height="12" rx="2" fill="#2f6fca" stroke="#fff" stroke-width="0.6"/><text x="543.5" y="478.7" text-anchor="middle" font-family="Liberation Sans" font-weight="bold" font-size="9.5" fill="#fff">661</text><rect x="690.1" y="467.7" width="21.2" height="12" rx="2" fill="#2f6fca" stroke="#fff" stroke-width="0.6"/><text x="700.7" y="477.1" text-anchor="middle" font-family="Liberation Sans" font-weight="bold" font-size="9.5" fill="#fff">66</text><rect x="433.4" y="524.9" width="15.6" height="12" rx="2" fill="#2f6fca" stroke="#fff" stroke-width="0.6"/><text x="441.2" y="534.3" text-anchor="middle" font-family="Liberation Sans" font-weight="bold" font-size="9.5" fill="#fff">3</text><rect x="465.6" y="533.5" width="21.2" height="12" rx="2" fill="#2f6fca" stroke="#fff" stroke-width="0.6"/><text x="476.2" y="542.9" text-anchor="middle" font-family="Liberation Sans" font-weight="bold" font-size="9.5" fill="#fff">66</text><rect x="793.2" y="613.6" width="15.6" height="12" rx="2" fill="#2f6fca" stroke="#fff" stroke-width="0.6"/><text x="801.0" y="623.0" text-anchor="middle" font-family="Liberation Sans" font-weight="bold" font-size="9.5" fill="#fff">3</text><rect x="483.9" y="619.4" width="21.2" height="12" rx="2" fill="#2f6fca" stroke="#fff" stroke-width="0.6"/><text x="494.5" y="628.8" text-anchor="middle" font-family="Liberation Sans" font-weight="bold" font-size="9.5" fill="#fff">67</text><rect x="352.4" y="652.5" width="21.2" height="12" rx="2" fill="#2f6fca" stroke="#fff" stroke-width="0.6"/><text x="363.0" y="661.9" text-anchor="middle" font-family="Liberation Sans" font-weight="bold" font-size="9.5" fill="#fff">63</text><rect x="226.9" y="600.7" width="15.6" height="12" rx="2" fill="#2f6fca" stroke="#fff" stroke-width="0.6"/><text x="307.8" y="348" font-family="Liberation Sans" font-size="12" fill="#fff" stroke="#fff" stroke-width="2.4" stroke-opacity="0.7">Limburg an</text><text x="307.8" y="348" font-family="Liberation Sans" font-size="12" fill="#3c4043" stroke="#3c4043" stroke-width="0.15">Limburg an</text><text x="314.8" y="359.7" font-family="Liberation Sans" font-size="12" fill="#fff" stroke="#fff" stroke-width="2.4" stroke-opacity="0.7">der Lahn</text><text x="314.8" y="359.7" font-family="Liberation Sans" font-size="12" fill="#3c4043" stroke="#3c4043" stroke-width="0.15">der Lahn</text><text x="542.3" y="372.2" font-family="Liberation Sans" font-size="12" fill="#fff" stroke="#fff" stroke-width="2.4" stroke-opacity="0.7">Bad Nauheim</text><text x="542.3" y="372.2" font-family="Liberation Sans" font-size="12" fill="#3c4043" stroke="#3c4043" stroke-width="0.15">Bad Nauheim</text><text x="556.7" y="387" font-family="Liberation Sans" font-size="12" fill="#fff" stroke="#fff" stroke-width="2.4" stroke-opacity="0.7">Friedberg</text><text x="556.7" y="387" font-family="Liberation Sans" font-size="12" fill="#3c4043" stroke="#3c4043" stroke-width="0.15">Friedberg</text><text x="557.9" y="398.6" font-family="Liberation Sans" font-size="12" fill="#fff" stroke="#fff" stroke-width="2.4" stroke-opacity="0.7">(Hessen)</text><text x="557.9" y="398.6" font-family="Liberation Sans" font-size="12" fill="#3c4043" stroke="#3c4043" stroke-width="0.15">(Hessen)</text><text x="831" y="380.3" font-family="Liberation Sans" font-size="12" fill="#fff" stroke="#fff" stroke-width="2.4" stroke-opacity="0.7">Schlücht</text><text x="831" y="380.3" font-family="Liberation Sans" font-size="12" fill="#3c4043" stroke="#3c4043" stroke-width="0.15">Schlücht</text><text x="497.6" y="444" font-family="Liberation Sans" font-size="12" fill="#fff" stroke="#fff" stroke-width="2.4" stroke-opacity="0.7">Bad Homburg</text><text x="497.6" y="444" font-family="Liberation Sans" font-size="12" fill="#3c4043" stroke="#3c4043" stroke-width="0.15">Bad Homburg</text><text x="500.3" y="455.8" font-family="Liberation Sans" font-size="12" fill="#fff" stroke="#fff" stroke-width="2.4" stroke-opacity="0.7">vor der Höhe</text><text x="500.3" y="455.8" font-family="Liberation Sans" font-size="12" fill="#3c4043" stroke="#3c4043" stroke-width="0.15">vor der Höhe</text><text x="387.5" y="457" font-family="Liberation Sans" font-size="12" fill="#fff" stroke="#fff" stroke-width="2.4" stroke-opacity="0.7">Idstein</text><text x="387.5" y="457" font-family="Liberation Sans" font-size="12" fill="#3c4043" stroke="#3c4043" stroke-width="0.15">Idstein</text><text x="778.4" y="451" font-family="Liberation Sans" font-size="12" fill="#fff" stroke="#fff" stroke-width="2.4" stroke-opacity="0.7">Bad Orb</text><text x="778.4" y="451" font-family="Liberation Sans" font-size="12" fill="#3c4043" stroke="#3c4043" stroke-width="0.15">Bad Orb</text><text x="709.2" y="464.8" font-family="Liberation Sans" font-size="12" fill="#fff" stroke="#fff" stroke-width="2.4" stroke-opacity="0.7">Gelnhausen</text><text x="709.2" y="464.8" font-family="Liberation Sans" font-size="12" fill="#3c4043" stroke="#3c4043" stroke-width="0.15">Gelnhausen</text><text x="516.6" y="510.3" font-family="Liberation Sans" font-size="20.3" fill="#fff" stroke="#fff" stroke-width="2.6" stroke-opacity="0.7">Frankfurt</text><text x="516.6" y="510.3" font-family="Liberation Sans" font-size="20.3" fill="#202124" stroke="#202124" stroke-width="0.6">Frankfurt</text><text x="518.2" y="529.7" font-family="Liberation Sans" font-size="20.3" fill="#fff" stroke="#fff" stroke-width="2.6" stroke-opacity="0.7">am Main</text><text x="518.2" y="529.7" font-family="Liberation Sans" font-size="20.3" fill="#202124" stroke="#202124" stroke-width="0.6">am Main</text><text x="627.9" y="508.7" font-family="Liberation Sans" font-size="12.5" fill="#fff" stroke="#fff" stroke-width="2.4" stroke-opacity="0.7">Hanau</text><text x="627.9" y="508.7" font-family="Liberation Sans" font-size="12.5" fill="#202124" stroke="#202124" stroke-width="0.5">Hanau</text><text x="364.2" y="536.7" font-family="Liberation Sans" font-size="12.8" fill="#fff" stroke="#fff" stroke-width="2.4" stroke-opacity="0.7">Wiesbaden</text><text x="364.2" y="536.7" font-family="Liberation Sans" font-size="12.8" fill="#202124" stroke="#202124" stroke-width="0.5">Wiesbaden</text><text x="526.4" y="550.3" font-family="Liberation Sans" font-size="12" fill="#fff" stroke="#fff" stroke-width="2.4" stroke-opacity="0.7">Neu-Isenburg</text><text x="526.4" y="550.3" font-family="Liberation Sans" font-size="12" fill="#3c4043" stroke="#3c4043" stroke-width="0.15">Neu-Isenburg</text><text x="628.7" y="556.2" font-family="Liberation Sans" font-size="12" fill="#fff" stroke="#fff" stroke-width="2.4" stroke-opacity="0.7">Seligenstadt</text><text x="628.7" y="556.2" font-family="Liberation Sans" font-size="12" fill="#3c4043" stroke="#3c4043" stroke-width="0.15">Seligenstadt</text><text x="612.4" y="571.7" font-family="Liberation Sans" font-size="12" fill="#fff" stroke="#fff" stroke-width="2.4" stroke-opacity="0.7">Rodgau</text><text x="612.4" y="571.7" font-family="Liberation Sans" font-size="12" fill="#3c4043" stroke="#3c4043" stroke-width="0.15">Rodgau</text><text x="380.9" y="585.3" font-family="Liberation Sans" font-size="12.8" fill="#fff" stroke="#fff" stroke-width="2.4" stroke-opacity="0.7">Mainz</text><text x="380.9" y="585.3" font-family="Liberation Sans" font-size="12.8" fill="#202124" stroke="#202124" stroke-width="0.5">Mainz</text><text x="428.4" y="581.4" font-family="Liberation Sans" font-size="12" fill="#fff" stroke="#fff" stroke-width="2.4" stroke-opacity="0.7">Rüsselsheim</text><text x="428.4" y="581.4" font-family="Liberation Sans" font-size="12" fill="#3c4043" stroke="#3c4043" stroke-width="0.15">Rüsselsheim</text><text x="439.3" y="593.1" font-family="Liberation Sans" font-size="12" fill="#fff" stroke="#fff" stroke-width="2.4" stroke-opacity="0.7">am Main</text><text x="439.3" y="593.1" font-family="Liberation Sans" font-size="12" fill="#3c4043" stroke="#3c4043" stroke-width="0.15">am Main</text><text x="534.2" y="579.5" font-family="Liberation Sans" font-size="12" fill="#fff" stroke="#fff" stroke-width="2.4" stroke-opacity="0.7">Langen</text><text x="534.2" y="579.5" font-family="Liberation Sans" font-size="12" fill="#3c4043" stroke="#3c4043" stroke-width="0.15">Langen</text><text x="526.4" y="591.2" font-family="Liberation Sans" font-size="12" fill="#fff" stroke="#fff" stroke-width="2.4" stroke-opacity="0.7">(Hessen)</text><text x="526.4" y="591.2" font-family="Liberation Sans" font-size="12" fill="#3c4043" stroke="#3c4043" stroke-width="0.15">(Hessen)</text><text x="683.1" y="591.2" font-family="Liberation Sans" font-size="12.2" fill="#fff" stroke="#fff" stroke-width="2.4" stroke-opacity="0.7">Aschaffenburg</text><text x="683.1" y="591.2" font-family="Liberation Sans" font-size="12.2" fill="#3c4043" stroke="#3c4043" stroke-width="0.15">Aschaffenburg</text><text x="844.6" y="586.5" font-family="Liberation Sans" font-size="12" fill="#fff" stroke="#fff" stroke-width="2.4" stroke-opacity="0.7">Lohr a</text><text x="844.6" y="586.5" font-family="Liberation Sans" font-size="12" fill="#3c4043" stroke="#3c4043" stroke-width="0.15">Lohr a</text><text x="255.3" y="593.1" font-family="Liberation Sans" font-size="12" fill="#fff" stroke="#fff" stroke-width="2.4" stroke-opacity="0.7">Bingen</text><text x="255.3" y="593.1" font-family="Liberation Sans" font-size="12" fill="#3c4043" stroke="#3c4043" stroke-width="0.15">Bingen</text><text x="248.7" y="604.8" font-family="Liberation Sans" font-size="12" fill="#fff" stroke="#fff" stroke-width="2.4" stroke-opacity="0.7">am Rhein</text><text x="248.7" y="604.8" font-family="Liberation Sans" font-size="12" fill="#3c4043" stroke="#3c4043" stroke-width="0.15">am Rhein</text><text x="303.1" y="587.3" font-family="Liberation Sans" font-size="12" fill="#fff" stroke="#fff" stroke-width="2.4" stroke-opacity="0.7">Ingelheim</text><text x="303.1" y="587.3" font-family="Liberation Sans" font-size="12" fill="#3c4043" stroke="#3c4043" stroke-width="0.15">Ingelheim</text><text x="303.9" y="599" font-family="Liberation Sans" font-size="12" fill="#fff" stroke="#fff" stroke-width="2.4" stroke-opacity="0.7">am Rhein</text><text x="303.9" y="599" font-family="Liberation Sans" font-size="12" fill="#3c4043" stroke="#3c4043" stroke-width="0.15">am Rhein</text><text x="515.9" y="652.6" font-family="Liberation Sans" font-size="12.8" fill="#fff" stroke="#fff" stroke-width="2.4" stroke-opacity="0.7">Darmstadt</text><text x="515.9" y="652.6" font-family="Liberation Sans" font-size="12.8" fill="#202124" stroke="#202124" stroke-width="0.5">Darmstadt</text><text x="252.6" y="663" font-family="Liberation Sans" font-size="12" fill="#fff" stroke="#fff" stroke-width="2.4" stroke-opacity="0.7">Bad</text><text x="252.6" y="663" font-family="Liberation Sans" font-size="12" fill="#3c4043" stroke="#3c4043" stroke-width="0.15">Bad</text><text x="234.7" y="674.8" font-family="Liberation Sans" font-size="12" fill="#fff" stroke="#fff" stroke-width="2.4" stroke-opacity="0.7">Kreuznach</text><text x="234.7" y="674.8" font-family="Liberation Sans" font-size="12" fill="#3c4043" stroke="#3c4043" stroke-width="0.15">Kreuznach</text><text x="848.4" y="668.2" font-family="Liberation Sans" font-size="12" fill="#fff" stroke="#fff" stroke-width="2.4" stroke-opacity="0.7">Mark</text><text x="848.4" y="668.2" font-family="Liberation Sans" font-size="12" fill="#3c4043" stroke="#3c4043" stroke-width="0.15">Mark</text><text x="0" y="0" transform="translate(427 606) rotate(72)" font-family="Liberation Sans" font-size="11" fill="#3d88c8" stroke="#ffffff" stroke-width="2.2" stroke-opacity="0.75" paint-order="stroke">Rhein</text><text x="245" y="681" font-family="Liberation Sans" font-weight="bold" font-size="17" stroke="#fff" stroke-width="2" paint-order="stroke"><tspan fill="#4285f4">G</tspan><tspan fill="#ea4335">o</tspan><tspan fill="#fbbc05">o</tspan><tspan fill="#4285f4">g</tspan><tspan fill="#34a853">l</tspan><tspan fill="#ea4335">e</tspan></text><rect x="331.5" y="673.6" width="547" height="14.4" fill="#f5f5f5" opacity="0.8"/><rect x="336" y="676.5" width="13" height="8" rx="1" fill="#444"/><rect x="337.2" y="677.6" width="1.4" height="1.5" fill="#f5f5f5"/><rect x="337.2" y="680.2" width="1.4" height="1.5" fill="#f5f5f5"/><rect x="339.5" y="677.6" width="1.4" height="1.5" fill="#f5f5f5"/><rect x="339.5" y="680.2" width="1.4" height="1.5" fill="#f5f5f5"/><rect x="341.8" y="677.6" width="1.4" height="1.5" fill="#f5f5f5"/><rect x="341.8" y="680.2" width="1.4" height="1.5" fill="#f5f5f5"/><rect x="344.1" y="677.6" width="1.4" height="1.5" fill="#f5f5f5"/><rect x="344.1" y="680.2" width="1.4" height="1.5" fill="#f5f5f5"/><rect x="346.4" y="677.6" width="1.4" height="1.5" fill="#f5f5f5"/><rect x="346.4" y="680.2" width="1.4" height="1.5" fill="#f5f5f5"/><rect x="338.5" y="682.8" width="8" height="1" fill="#f5f5f5"/><text x="362" y="684.6" font-family="Liberation Sans" font-size="9.8" fill="#333">Kartendaten ©2024 GeoBasis-DE/BKG (©2009), Google</text><text x="620" y="684.6" font-family="Liberation Sans" font-size="9.9" fill="#333">Nutzungsbedingungen</text><text x="732" y="684.6" font-family="Liberation Sans" font-size="9.85" fill="#333">Fehler bei Google Maps melden</text></g></svg>
<div class="a" style="left:235px;top:718px;width:643px;height:345px;background:#fff;border-radius:4px 4px 0 0;box-shadow:0 0 0 1px rgba(215,245,215,0.55),0 1px 6px rgba(0,0,0,0.06);"></div>
<div class="a" style="left:235px;top:718px;width:643px;height:45px;background:#8bd57e;border-radius:4px 4px 0 0;"></div>
<div class="t" style="left:257.00px;top:735.46px;font-size:16px;font-weight:bold;color:#111;">My Categories</div>
<div class="a" style="left:807px;top:731px;width:58px;height:25px;background:#0d90db;border-radius:0 4px 0 0;"></div>
<svg class="ic" style="left:812px;top:737px" width="14" height="12" viewBox="0 0 14 12"><path d="M9 5.5 V10.5 H1 V2.5 H6" stroke="#fff" stroke-width="1.6" fill="none"/><path d="M5.5 7 L12 0.8" stroke="#fff" stroke-width="1.8"/><path d="M8.2 0 H13.5 V5.3 Z" fill="#fff"/></svg>
<div class="t" style="left:829.00px;top:737.00px;font-size:13px;color:#fff;-webkit-text-stroke:0.2px #fff;">Open</div>
<div class="t" style="left:237.70px;top:768.74px;font-size:13.3px;font-weight:bold;color:#333;">Category</div>
<div class="t" style="left:367.50px;top:768.74px;font-size:13.3px;font-weight:bold;color:#333;">Own Category</div>
<div class="a" style="left:235px;top:788px;width:643px;height:1px;background:#a9a9a9;"></div>
<div class="a" style="left:365px;top:789px;width:1px;height:274px;background:#b0b0b0;"></div>
<div class="a" style="left:235px;top:813.30px;width:643px;height:1px;background:#c4c4c4;"></div>
<div class="t" style="left:239.70px;top:795.38px;font-size:10.65px;color:#222;">VAN_8</div>
<div class="t" style="left:370.00px;top:795.38px;font-size:10.65px;color:#222;">Business-Class-Van (max. 8 PAX)</div>
<div class="a" style="left:235px;top:837.52px;width:643px;height:1px;background:#c4c4c4;"></div>
<div class="t" style="left:239.70px;top:819.60px;font-size:10.65px;color:#222;">SUV_CORP</div>
<div class="t" style="left:370.00px;top:819.60px;font-size:10.65px;color:#222;">Executive SUV</div>
<div class="a" style="left:235px;top:861.74px;width:643px;height:1px;background:#c4c4c4;"></div>
<div class="t" style="left:239.70px;top:843.82px;font-size:10.65px;color:#222;">SUV</div>
<div class="t" style="left:370.00px;top:843.82px;font-size:10.65px;color:#222;">Business-Class-SUV (max. 7 PAX)</div>
<div class="a" style="left:235px;top:885.96px;width:643px;height:1px;background:#c4c4c4;"></div>
<div class="t" style="left:239.70px;top:868.04px;font-size:10.65px;color:#222;">SEDAN</div>
<div class="t" style="left:370.00px;top:868.04px;font-size:10.65px;color:#222;">Business-Class-Limousine (max. 3 PAX)</div>
<div class="a" style="left:235px;top:910.18px;width:643px;height:1px;background:#c4c4c4;"></div>
<div class="t" style="left:239.70px;top:892.26px;font-size:10.65px;color:#222;">SEDAN_LUX</div>
<div class="t" style="left:370.00px;top:892.26px;font-size:10.65px;color:#222;">First-Class-Limousine (max. 3 PAX)</div>
<div class="a" style="left:235px;top:934.40px;width:643px;height:1px;background:#c4c4c4;"></div>
<div class="t" style="left:239.70px;top:916.48px;font-size:10.65px;color:#222;">SEDAN_CORP</div>
<div class="t" style="left:370.00px;top:916.48px;font-size:10.65px;color:#222;">Luxury-Class-Limousine (max 3 PAX)</div>
<div class="a" style="left:235px;top:958.62px;width:643px;height:1px;background:#c4c4c4;"></div>
<div class="t" style="left:239.70px;top:940.70px;font-size:10.65px;color:#222;">LIMO_12</div>
<div class="t" style="left:370.00px;top:940.70px;font-size:10.65px;color:#222;">First-Class-Limousine_S (max. 3 PAX)</div>
<div class="a" style="left:235px;top:982.84px;width:643px;height:1px;background:#c4c4c4;"></div>
<div class="t" style="left:239.70px;top:964.92px;font-size:10.65px;color:#222;">COACH_50_55</div>
<div class="t" style="left:370.00px;top:964.92px;font-size:10.65px;color:#222;">Business-Class-Bus (max. 50 PAX)</div>
<div class="a" style="left:235px;top:1007.06px;width:643px;height:1px;background:#c4c4c4;"></div>
<div class="t" style="left:239.70px;top:989.14px;font-size:10.65px;color:#222;">BUS_20_25</div>
<div class="t" style="left:370.00px;top:989.14px;font-size:10.65px;color:#222;">VIP Bus (max. 24 Pax)</div>
<div class="a" style="left:235px;top:1031.28px;width:643px;height:1px;background:#c4c4c4;"></div>
<div class="t" style="left:239.70px;top:1013.36px;font-size:10.65px;color:#222;">SPRINTER</div>
<div class="t" style="left:370.00px;top:1013.36px;font-size:10.65px;color:#222;">VIP Sprinter (max. 19 PAX)</div>
<div class="a" style="left:235px;top:1055.50px;width:643px;height:1px;background:#c4c4c4;"></div>
<div class="t" style="left:239.70px;top:1037.58px;font-size:10.65px;color:#222;">VAN_CORP_14</div>
<div class="t" style="left:370.00px;top:1037.58px;font-size:10.65px;color:#222;">VIP-Sprinter (max. 16 PAX)</div>
<div class="a" style="left:908px;top:119px;width:980px;height:69px;background:#fff;border-radius:4px 4px 0 0;box-shadow:0 0 0 1px rgba(215,245,215,0.55),0 1px 6px rgba(0,0,0,0.06);"></div>
<div class="a" style="left:908px;top:119px;width:980px;height:45px;background:#8bd57e;border-radius:4px 4px 0 0;"></div>
<div class="t" style="left:930.00px;top:136.46px;font-size:16px;font-weight:bold;color:#111;">Network usage []</div>
<div class="a" style="left:1817px;top:131px;width:58px;height:25px;background:#0d90db;border-radius:0 4px 0 0;"></div>
<svg class="ic" style="left:1822px;top:137px" width="14" height="12" viewBox="0 0 14 12"><path d="M9 5.5 V10.5 H1 V2.5 H6" stroke="#fff" stroke-width="1.6" fill="none"/><path d="M5.5 7 L12 0.8" stroke="#fff" stroke-width="1.8"/><path d="M8.2 0 H13.5 V5.3 Z" fill="#fff"/></svg>
<div class="t" style="left:1839.00px;top:137.00px;font-size:13px;color:#fff;-webkit-text-stroke:0.2px #fff;">Open</div>
<div class="t" style="left:911.00px;top:169.50px;font-size:13px;font-weight:bold;color:#333;">Date</div>
<div class="t" style="left:994.70px;top:169.50px;font-size:13px;font-weight:bold;color:#333;">Category</div>
<div class="t" style="left:1148.00px;top:169.50px;font-size:13px;font-weight:bold;color:#333;">From</div>
<div class="t" style="left:1243.50px;top:169.50px;font-size:13px;font-weight:bold;color:#333;">To</div>
<div class="t" style="left:1294.30px;top:169.50px;font-size:13px;font-weight:bold;color:#333;">Pickup</div>
<div class="t" style="left:1414.50px;top:169.50px;font-size:13px;font-weight:bold;color:#333;">PAX</div>
<div class="t" style="left:1493.00px;top:169.50px;font-size:13px;font-weight:bold;color:#333;">Service</div>
<div class="t" style="left:1701.50px;top:169.50px;font-size:13px;font-weight:bold;color:#333;">My Rate</div>
<div class="t" style="left:1758.00px;top:169.50px;font-size:13px;font-weight:bold;color:#333;">Affiliate</div>
<div class="a" style="left:1903px;top:0px;width:17px;height:1063px;background:#f1f1f1;"></div>
<div class="a" style="left:1905px;top:17px;width:13px;height:886px;background:#c1c1c1;"></div>
<svg class="ic" style="left:1903px;top:0" width="17" height="17"><path d="M5 11 L8.5 7 L12 11 Z" fill="#a3a3a3"/></svg>
<svg class="ic" style="left:1903px;top:1046px" width="17" height="17"><path d="M5 6 L8.5 10 L12 6 Z" fill="#505050"/></svg>
<div class="a" style="left:0px;top:1063px;width:1903px;height:17px;background:#f1f1f1;"></div>
<div class="a" style="left:17px;top:1065px;width:1854px;height:13px;background:#c1c1c1;"></div>
<svg class="ic" style="left:0;top:1063px" width="17" height="17"><path d="M10 5 L6 8.5 L10 12 Z" fill="#a3a3a3"/></svg>
<svg class="ic" style="left:1886px;top:1063px" width="17" height="17"><path d="M7 5 L11 8.5 L7 12 Z" fill="#505050"/></svg>
<div class="a" style="left:1903px;top:1063px;width:17px;height:17px;background:#dcdcdc;"></div>
</body></html>
